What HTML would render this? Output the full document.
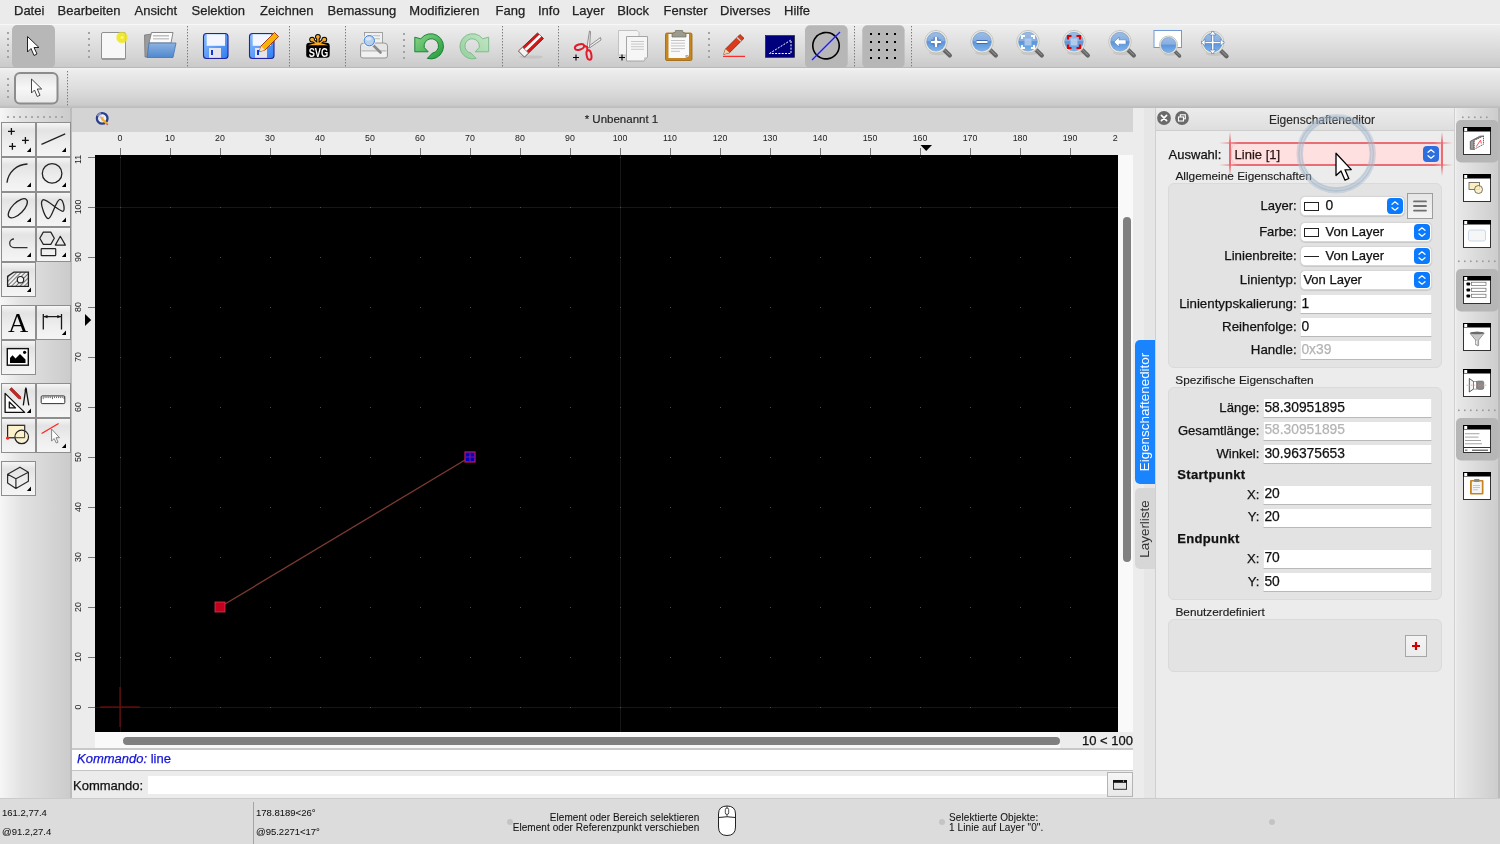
<!DOCTYPE html>
<html><head><meta charset="utf-8"><style>
html,body{margin:0;padding:0;width:1500px;height:844px;overflow:hidden;background:#ececec;font-family:"Liberation Sans",sans-serif}
.b,.t,svg.a{position:absolute}
.t{white-space:nowrap}
</style></head><body>
<div id="root" style="position:absolute;left:0;top:0;width:1500px;height:844px;overflow:hidden;will-change:transform">
<div class="b" style="left:0px;top:0px;width:1500px;height:24px;background:#ebebeb"></div>
<div class="t" style="left:14px;top:4.00px;font-size:13px;line-height:13px;color:#222;font-weight:normal;-webkit-text-stroke:0.25px currentColor;">Datei</div>
<div class="t" style="left:57.5px;top:4.00px;font-size:13px;line-height:13px;color:#222;font-weight:normal;-webkit-text-stroke:0.25px currentColor;">Bearbeiten</div>
<div class="t" style="left:134.5px;top:4.00px;font-size:13px;line-height:13px;color:#222;font-weight:normal;-webkit-text-stroke:0.25px currentColor;">Ansicht</div>
<div class="t" style="left:191.5px;top:4.00px;font-size:13px;line-height:13px;color:#222;font-weight:normal;-webkit-text-stroke:0.25px currentColor;">Selektion</div>
<div class="t" style="left:260px;top:4.00px;font-size:13px;line-height:13px;color:#222;font-weight:normal;-webkit-text-stroke:0.25px currentColor;">Zeichnen</div>
<div class="t" style="left:327.5px;top:4.00px;font-size:13px;line-height:13px;color:#222;font-weight:normal;-webkit-text-stroke:0.25px currentColor;">Bemassung</div>
<div class="t" style="left:409.3px;top:4.00px;font-size:13px;line-height:13px;color:#222;font-weight:normal;-webkit-text-stroke:0.25px currentColor;">Modifizieren</div>
<div class="t" style="left:495.5px;top:4.00px;font-size:13px;line-height:13px;color:#222;font-weight:normal;-webkit-text-stroke:0.25px currentColor;">Fang</div>
<div class="t" style="left:538px;top:4.00px;font-size:13px;line-height:13px;color:#222;font-weight:normal;-webkit-text-stroke:0.25px currentColor;">Info</div>
<div class="t" style="left:572px;top:4.00px;font-size:13px;line-height:13px;color:#222;font-weight:normal;-webkit-text-stroke:0.25px currentColor;">Layer</div>
<div class="t" style="left:617.3px;top:4.00px;font-size:13px;line-height:13px;color:#222;font-weight:normal;-webkit-text-stroke:0.25px currentColor;">Block</div>
<div class="t" style="left:663.5px;top:4.00px;font-size:13px;line-height:13px;color:#222;font-weight:normal;-webkit-text-stroke:0.25px currentColor;">Fenster</div>
<div class="t" style="left:720px;top:4.00px;font-size:13px;line-height:13px;color:#222;font-weight:normal;-webkit-text-stroke:0.25px currentColor;">Diverses</div>
<div class="t" style="left:784px;top:4.00px;font-size:13px;line-height:13px;color:#222;font-weight:normal;-webkit-text-stroke:0.25px currentColor;">Hilfe</div>
<div class="b" style="left:0px;top:24px;width:1500px;height:44px;background:linear-gradient(#efefef,#e6e6e6 25%,#d6d6d6 70%,#c9c9c9)"></div>
<div class="b" style="left:0px;top:24px;width:1500px;height:1px;background:#f7f7f7"></div>
<div class="b" style="left:0px;top:67px;width:1500px;height:1px;background:#b9b9b9"></div>
<div class="b" style="left:0px;top:68px;width:1500px;height:40px;background:linear-gradient(#f3f3f3,#ececec 8%,#dcdcdc 55%,#cbcbcb 92%,#bababa)"></div>
<svg class="a" style="left:0;top:0" width="1500" height="108" viewBox="0 0 1500 108"><defs>
<linearGradient id="lensg" x1="0" y1="0" x2="0" y2="1"><stop offset="0" stop-color="#9cbde6"/><stop offset="0.45" stop-color="#86aee0"/><stop offset="0.5" stop-color="#5d93d8"/><stop offset="1" stop-color="#7ab4ee"/></linearGradient>
<linearGradient id="flopg" x1="0" y1="0" x2="1" y2="1"><stop offset="0" stop-color="#8ec0ff"/><stop offset="1" stop-color="#2f7cf0"/></linearGradient>
<linearGradient id="folderg" x1="0" y1="0" x2="0" y2="1"><stop offset="0" stop-color="#8db3e0"/><stop offset="1" stop-color="#4f88cf"/></linearGradient>
<radialGradient id="glow"><stop offset="0" stop-color="#fffbe0"/><stop offset="0.3" stop-color="#f2ea20"/><stop offset="0.75" stop-color="#ece21a" stop-opacity="0.8"/><stop offset="1" stop-color="#f0e830" stop-opacity="0"/></radialGradient>
</defs><rect x="12" y="25" width="43" height="43" rx="5" fill="#b7b7b7"/><rect x="7" y="32" width="2" height="2" fill="#a3a3a3"/><rect x="7" y="38" width="2" height="2" fill="#a3a3a3"/><rect x="7" y="44" width="2" height="2" fill="#a3a3a3"/><rect x="7" y="50" width="2" height="2" fill="#a3a3a3"/><rect x="7" y="56" width="2" height="2" fill="#a3a3a3"/><path d="M27.5 36.5 L27.5 52 L31 48.5 L34 55.5 L37 54 L34 47.5 L39 47.5 Z" fill="#fff" stroke="#222" stroke-width="1" stroke-linejoin="round"/><rect x="88" y="32" width="2" height="2" fill="#a3a3a3"/><rect x="88" y="38" width="2" height="2" fill="#a3a3a3"/><rect x="88" y="44" width="2" height="2" fill="#a3a3a3"/><rect x="88" y="50" width="2" height="2" fill="#a3a3a3"/><rect x="88" y="56" width="2" height="2" fill="#a3a3a3"/><rect x="101.5" y="32.5" width="24" height="27" rx="1.5" fill="#f7f7f7" stroke="#8f8f8f" stroke-width="1"/><rect x="102" y="58" width="23" height="2" fill="#9a9a9a"/><circle cx="122" cy="37.5" r="6.5" fill="url(#glow)"/><path d="M144.5 35 L152 34 L149 57 L145 57 Z" fill="#9b9b9b" stroke="#777" stroke-width="0.8"/><path d="M151.5 32.5 L173 32.5 L171 43 L149 43 Z" fill="#fbfbfb" stroke="#7d7d7d" stroke-width="0.9"/><rect x="153" y="35" width="16" height="1.5" fill="#bdbdbd"/><rect x="153" y="38" width="16" height="1.5" fill="#c8c8c8"/><path d="M149 43 L176 43 L173 57.5 L147 57.5 Z" fill="url(#folderg)" stroke="#3f74b8" stroke-width="0.8"/><rect x="187" y="26" width="1" height="1.4" fill="#7a7a7a"/><rect x="187" y="29" width="1" height="1.4" fill="#7a7a7a"/><rect x="187" y="32" width="1" height="1.4" fill="#7a7a7a"/><rect x="187" y="35" width="1" height="1.4" fill="#7a7a7a"/><rect x="187" y="38" width="1" height="1.4" fill="#7a7a7a"/><rect x="187" y="41" width="1" height="1.4" fill="#7a7a7a"/><rect x="187" y="44" width="1" height="1.4" fill="#7a7a7a"/><rect x="187" y="47" width="1" height="1.4" fill="#7a7a7a"/><rect x="187" y="50" width="1" height="1.4" fill="#7a7a7a"/><rect x="187" y="53" width="1" height="1.4" fill="#7a7a7a"/><rect x="187" y="56" width="1" height="1.4" fill="#7a7a7a"/><rect x="187" y="59" width="1" height="1.4" fill="#7a7a7a"/><rect x="187" y="62" width="1" height="1.4" fill="#7a7a7a"/><rect x="187" y="65" width="1" height="1.4" fill="#7a7a7a"/><rect x="203.5" y="33.5" width="24.5" height="25" rx="3" fill="url(#flopg)" stroke="#2323a0" stroke-width="1.1"/><rect x="206.7" y="34.3" width="18.3" height="11.5" fill="#f4f6ff"/><rect x="209.0" y="48" width="12" height="9.8" fill="#e4e4ea"/><rect x="211.0" y="50" width="2" height="5" fill="#1038d8"/><rect x="249.5" y="33.5" width="24.5" height="25" rx="3" fill="url(#flopg)" stroke="#2323a0" stroke-width="1.1"/><rect x="252.7" y="34.3" width="18.3" height="11.5" fill="#f4f6ff"/><rect x="255.0" y="48" width="12" height="9.8" fill="#e4e4ea"/><rect x="257.0" y="50" width="2" height="5" fill="#1038d8"/><path d="M259.5 51.5 L261 46 L274.5 32.5 L278.5 36.5 L265 50 Z" fill="#f5b400" stroke="#a02810" stroke-width="0.9" stroke-linejoin="round"/><path d="M259.5 51.5 L261 46 L265 50 Z" fill="#f3e2b8"/><rect x="289" y="26" width="1" height="1.4" fill="#7a7a7a"/><rect x="289" y="29" width="1" height="1.4" fill="#7a7a7a"/><rect x="289" y="32" width="1" height="1.4" fill="#7a7a7a"/><rect x="289" y="35" width="1" height="1.4" fill="#7a7a7a"/><rect x="289" y="38" width="1" height="1.4" fill="#7a7a7a"/><rect x="289" y="41" width="1" height="1.4" fill="#7a7a7a"/><rect x="289" y="44" width="1" height="1.4" fill="#7a7a7a"/><rect x="289" y="47" width="1" height="1.4" fill="#7a7a7a"/><rect x="289" y="50" width="1" height="1.4" fill="#7a7a7a"/><rect x="289" y="53" width="1" height="1.4" fill="#7a7a7a"/><rect x="289" y="56" width="1" height="1.4" fill="#7a7a7a"/><rect x="289" y="59" width="1" height="1.4" fill="#7a7a7a"/><rect x="289" y="62" width="1" height="1.4" fill="#7a7a7a"/><rect x="289" y="65" width="1" height="1.4" fill="#7a7a7a"/><g><rect x="306.2" y="42.8" width="23.5" height="14.9" rx="3.2" fill="#000"/><path d="M318 44.5 L312.1 39.6 M318 44.5 L317.9 36.8 M318 44.5 L324.3 39.6" stroke="#000" stroke-width="3.4" stroke-linecap="round"/><circle cx="312.1" cy="39.6" r="2.9" fill="#000"/><circle cx="317.9" cy="36.8" r="2.9" fill="#000"/><circle cx="324.3" cy="39.6" r="2.9" fill="#000"/><path d="M318 44.5 L312.1 39.6 M318 44.5 L317.9 36.8 M318 44.5 L324.3 39.6" stroke="#f7a928" stroke-width="1.4" stroke-linecap="round"/><circle cx="312.1" cy="39.6" r="1.9" fill="#f7a928"/><circle cx="317.9" cy="36.8" r="1.9" fill="#f7a928"/><circle cx="324.3" cy="39.6" r="1.9" fill="#f7a928"/><path d="M308 45.3 Q313 43.8 318 42.5 Q323 43.8 328.2 45.3 Z" fill="#f7a928"/><text x="0" y="0" transform="translate(318.4 56.8) scale(0.68 1)" text-anchor="middle" font-family="Liberation Sans" font-weight="bold" font-size="13.6" fill="#fff">SVG</text></g><rect x="345" y="26" width="1" height="1.4" fill="#7a7a7a"/><rect x="345" y="29" width="1" height="1.4" fill="#7a7a7a"/><rect x="345" y="32" width="1" height="1.4" fill="#7a7a7a"/><rect x="345" y="35" width="1" height="1.4" fill="#7a7a7a"/><rect x="345" y="38" width="1" height="1.4" fill="#7a7a7a"/><rect x="345" y="41" width="1" height="1.4" fill="#7a7a7a"/><rect x="345" y="44" width="1" height="1.4" fill="#7a7a7a"/><rect x="345" y="47" width="1" height="1.4" fill="#7a7a7a"/><rect x="345" y="50" width="1" height="1.4" fill="#7a7a7a"/><rect x="345" y="53" width="1" height="1.4" fill="#7a7a7a"/><rect x="345" y="56" width="1" height="1.4" fill="#7a7a7a"/><rect x="345" y="59" width="1" height="1.4" fill="#7a7a7a"/><rect x="345" y="62" width="1" height="1.4" fill="#7a7a7a"/><rect x="345" y="65" width="1" height="1.4" fill="#7a7a7a"/><rect x="364.5" y="32.5" width="18" height="13" fill="#f0f0f0" stroke="#9a9a9a" stroke-width="0.9"/><rect x="367" y="35" width="13" height="1.3" fill="#c8c8c8"/><rect x="367" y="38" width="13" height="1.3" fill="#c8c8c8"/><path d="M360.5 46 Q360.5 43 364 43 L384 43 Q387.5 43 387.5 46 L387.5 56 Q387.5 58 385 58 L363 58 Q360.5 58 360.5 56 Z" fill="#e6e6e6" stroke="#8f8f8f" stroke-width="0.9"/><rect x="361.5" y="50" width="25" height="1.5" fill="#c4c4c4"/><rect x="362" y="52" width="24" height="5" fill="#f4f4f4" opacity="0.8"/><line x1="373" y1="45" x2="380.5" y2="52.5" stroke="#8a8a8a" stroke-width="2.6" stroke-linecap="round"/><circle cx="369.3" cy="40.7" r="6.3" fill="#fff" opacity="0.9"/><circle cx="369.3" cy="40.7" r="5.2" fill="#b8d0ee" stroke="#3f7fd0" stroke-width="1"/><ellipse cx="368.5" cy="38.8" rx="3" ry="1.8" fill="#e0ecfa" opacity="0.8"/><rect x="403" y="33" width="2" height="2" fill="#a3a3a3"/><rect x="403" y="39" width="2" height="2" fill="#a3a3a3"/><rect x="403" y="45" width="2" height="2" fill="#a3a3a3"/><rect x="403" y="51" width="2" height="2" fill="#a3a3a3"/><rect x="403" y="57" width="2" height="2" fill="#a3a3a3"/><defs><linearGradient id="undog" x1="0" y1="0" x2="1" y2="1"><stop offset="0" stop-color="#8ad68a"/><stop offset="1" stop-color="#1f9a38"/></linearGradient><linearGradient id="redog" x1="0" y1="0" x2="1" y2="1"><stop offset="0" stop-color="#c4e6c6"/><stop offset="1" stop-color="#93cf9c"/></linearGradient></defs><path d="M414.8 37.2 L414.8 51.8 L428.2 51.8 L424.3 47.6 A7.2 7.2 0 1 1 432.4 53.1 L427.3 58.4 A12.6 12.6 0 1 0 420.8 38.8 Z" fill="url(#undog)" stroke="#127a2c" stroke-width="0.9" stroke-linejoin="round"/><path transform="matrix(-1 0 0 1 903.45 0)" d="M414.8 37.2 L414.8 51.8 L428.2 51.8 L424.3 47.6 A7.2 7.2 0 1 1 432.4 53.1 L427.3 58.4 A12.6 12.6 0 1 0 420.8 38.8 Z" fill="url(#redog)" stroke="#78b888" stroke-width="0.9" stroke-linejoin="round"/><rect x="502" y="26" width="1" height="1.4" fill="#7a7a7a"/><rect x="502" y="29" width="1" height="1.4" fill="#7a7a7a"/><rect x="502" y="32" width="1" height="1.4" fill="#7a7a7a"/><rect x="502" y="35" width="1" height="1.4" fill="#7a7a7a"/><rect x="502" y="38" width="1" height="1.4" fill="#7a7a7a"/><rect x="502" y="41" width="1" height="1.4" fill="#7a7a7a"/><rect x="502" y="44" width="1" height="1.4" fill="#7a7a7a"/><rect x="502" y="47" width="1" height="1.4" fill="#7a7a7a"/><rect x="502" y="50" width="1" height="1.4" fill="#7a7a7a"/><rect x="502" y="53" width="1" height="1.4" fill="#7a7a7a"/><rect x="502" y="56" width="1" height="1.4" fill="#7a7a7a"/><rect x="502" y="59" width="1" height="1.4" fill="#7a7a7a"/><rect x="502" y="62" width="1" height="1.4" fill="#7a7a7a"/><rect x="502" y="65" width="1" height="1.4" fill="#7a7a7a"/><ellipse cx="531" cy="57" rx="12" ry="1.6" fill="#bbb" opacity="0.6"/><path d="M518.5 51 L537.5 33 L543.5 38.5 L524.5 57 Z" fill="#d01818" stroke="#6a1010" stroke-width="0.8" stroke-linejoin="round"/><path d="M520.5 52.8 L539.3 34.8 L541.3 36.6 L522.5 54.8 Z" fill="#fff"/><path d="M518.5 51 L522.5 47.3 L528.5 53 L524.5 57 Z" fill="#f4f4f4" stroke="#777" stroke-width="0.8"/><rect x="558" y="26" width="1" height="1.4" fill="#7a7a7a"/><rect x="558" y="29" width="1" height="1.4" fill="#7a7a7a"/><rect x="558" y="32" width="1" height="1.4" fill="#7a7a7a"/><rect x="558" y="35" width="1" height="1.4" fill="#7a7a7a"/><rect x="558" y="38" width="1" height="1.4" fill="#7a7a7a"/><rect x="558" y="41" width="1" height="1.4" fill="#7a7a7a"/><rect x="558" y="44" width="1" height="1.4" fill="#7a7a7a"/><rect x="558" y="47" width="1" height="1.4" fill="#7a7a7a"/><rect x="558" y="50" width="1" height="1.4" fill="#7a7a7a"/><rect x="558" y="53" width="1" height="1.4" fill="#7a7a7a"/><rect x="558" y="56" width="1" height="1.4" fill="#7a7a7a"/><rect x="558" y="59" width="1" height="1.4" fill="#7a7a7a"/><rect x="558" y="62" width="1" height="1.4" fill="#7a7a7a"/><rect x="558" y="65" width="1" height="1.4" fill="#7a7a7a"/><path d="M587 47 L589.5 31 L590.5 31.5 L589.5 48 Z" fill="#f0f0f0" stroke="#777" stroke-width="0.8"/><path d="M589 46 L600.5 37.5 L601 40 L590 47.5 Z" fill="#f0f0f0" stroke="#777" stroke-width="0.8"/><ellipse cx="579.5" cy="47" rx="4.8" ry="2.6" transform="rotate(-20 579.5 47)" fill="none" stroke="#e01c2c" stroke-width="2"/><ellipse cx="589" cy="55" rx="2.4" ry="4.8" transform="rotate(-10 589 55)" fill="none" stroke="#e01c2c" stroke-width="2"/><path d="M583.5 45.5 L587 47 L587.5 51" fill="none" stroke="#e01c2c" stroke-width="2"/><path d="M573 57.5 L579 57.5 M576 54.5 L576 60.5" stroke="#000" stroke-width="1.1"/><path d="M618.5 30.5 L637 30.5 L639 32.5 L639 55 L618.5 55 Z" fill="#f4f4f4" stroke="#b8b8b8" stroke-width="0.8"/><path d="M626.5 36.5 L647.5 36.5 L647.5 57 L644 61 L626.5 61 Z" fill="#f6f6f6" stroke="#9d9d9d" stroke-width="0.9"/><path d="M644 61 L644 57.5 L647.5 57 Z" fill="#c9c9c9"/><rect x="631" y="41.0" width="13" height="1" fill="#c8c8c8"/><rect x="631" y="43.6" width="13" height="1" fill="#c8c8c8"/><rect x="631" y="46.2" width="13" height="1" fill="#c8c8c8"/><rect x="631" y="48.8" width="13" height="1" fill="#c8c8c8"/><path d="M619 57.5 L625 57.5 M622 54.5 L622 60.5" stroke="#000" stroke-width="1.1"/><rect x="665.5" y="33" width="26.5" height="27.5" rx="1.5" fill="#c5851f" stroke="#9a6414" stroke-width="0.8"/><path d="M668.5 34 L689 34 L689 56 L685.5 58 L668.5 58 Z" fill="#fafafa"/><path d="M685.5 58 L685.5 55 L689 55 Z" fill="#aaa"/><path d="M672 37 L672 34 Q673 32.5 675 32.5 L675.5 30.5 L682.5 30.5 L683 32.5 Q685 32.5 686 34 L686 37 Z" fill="#9b9b8e" stroke="#6f6f66" stroke-width="0.7"/><rect x="671" y="40.0" width="14" height="1" fill="#c4c4c4"/><rect x="671" y="42.7" width="14" height="1" fill="#c4c4c4"/><rect x="671" y="45.4" width="14" height="1" fill="#c4c4c4"/><rect x="671" y="48.1" width="14" height="1" fill="#c4c4c4"/><rect x="671" y="50.8" width="9" height="1" fill="#c4c4c4"/><rect x="708" y="32" width="2" height="2" fill="#a3a3a3"/><rect x="708" y="38" width="2" height="2" fill="#a3a3a3"/><rect x="708" y="44" width="2" height="2" fill="#a3a3a3"/><rect x="708" y="50" width="2" height="2" fill="#a3a3a3"/><rect x="708" y="56" width="2" height="2" fill="#a3a3a3"/><rect x="723" y="55.8" width="22" height="1.1" fill="#ff1a1a"/><path d="M723.8 54.3 L725.5 49 L740 34.5 L744 38.3 L729.5 52.7 Z" fill="#dc3a1c" stroke="#7a2e10" stroke-width="0.8" stroke-linejoin="round"/><path d="M723.8 54.3 L725.5 49 L729.5 52.7 Z" fill="#efd7a8"/><path d="M737 37.5 L741 41.3" stroke="#ccc" stroke-width="1.5"/><rect x="765.5" y="35.6" width="29" height="21.7" fill="#00007c" stroke="#111" stroke-width="0.6"/><path d="M769.5 53.5 L791 40 L791 53.5 Z" fill="none" stroke="#fff" stroke-width="1" stroke-dasharray="2 1.3"/><rect x="805" y="25.3" width="42.7" height="42.7" rx="5" fill="#b7b7b7"/><circle cx="826" cy="45.7" r="13.2" fill="none" stroke="#000" stroke-width="1.6" stroke-dasharray="2.4 0" /><line x1="812" y1="60" x2="840" y2="32" stroke="#1a1aff" stroke-width="1.2"/><rect x="854" y="26" width="1" height="1.4" fill="#7a7a7a"/><rect x="854" y="29" width="1" height="1.4" fill="#7a7a7a"/><rect x="854" y="32" width="1" height="1.4" fill="#7a7a7a"/><rect x="854" y="35" width="1" height="1.4" fill="#7a7a7a"/><rect x="854" y="38" width="1" height="1.4" fill="#7a7a7a"/><rect x="854" y="41" width="1" height="1.4" fill="#7a7a7a"/><rect x="854" y="44" width="1" height="1.4" fill="#7a7a7a"/><rect x="854" y="47" width="1" height="1.4" fill="#7a7a7a"/><rect x="854" y="50" width="1" height="1.4" fill="#7a7a7a"/><rect x="854" y="53" width="1" height="1.4" fill="#7a7a7a"/><rect x="854" y="56" width="1" height="1.4" fill="#7a7a7a"/><rect x="854" y="59" width="1" height="1.4" fill="#7a7a7a"/><rect x="854" y="62" width="1" height="1.4" fill="#7a7a7a"/><rect x="854" y="65" width="1" height="1.4" fill="#7a7a7a"/><rect x="862.3" y="25.3" width="42.3" height="42.7" rx="5" fill="#b7b7b7"/><rect x="870" y="33" width="2" height="2" fill="#000"/><rect x="870" y="41" width="2" height="2" fill="#000"/><rect x="870" y="49" width="2" height="2" fill="#000"/><rect x="870" y="57" width="2" height="2" fill="#000"/><rect x="878" y="33" width="2" height="2" fill="#000"/><rect x="878" y="41" width="2" height="2" fill="#000"/><rect x="878" y="49" width="2" height="2" fill="#000"/><rect x="878" y="57" width="2" height="2" fill="#000"/><rect x="886" y="33" width="2" height="2" fill="#000"/><rect x="886" y="41" width="2" height="2" fill="#000"/><rect x="886" y="49" width="2" height="2" fill="#000"/><rect x="886" y="57" width="2" height="2" fill="#000"/><rect x="894" y="33" width="2" height="2" fill="#000"/><rect x="894" y="41" width="2" height="2" fill="#000"/><rect x="894" y="49" width="2" height="2" fill="#000"/><rect x="894" y="57" width="2" height="2" fill="#000"/><rect x="911" y="26" width="1" height="1.4" fill="#7a7a7a"/><rect x="911" y="29" width="1" height="1.4" fill="#7a7a7a"/><rect x="911" y="32" width="1" height="1.4" fill="#7a7a7a"/><rect x="911" y="35" width="1" height="1.4" fill="#7a7a7a"/><rect x="911" y="38" width="1" height="1.4" fill="#7a7a7a"/><rect x="911" y="41" width="1" height="1.4" fill="#7a7a7a"/><rect x="911" y="44" width="1" height="1.4" fill="#7a7a7a"/><rect x="911" y="47" width="1" height="1.4" fill="#7a7a7a"/><rect x="911" y="50" width="1" height="1.4" fill="#7a7a7a"/><rect x="911" y="53" width="1" height="1.4" fill="#7a7a7a"/><rect x="911" y="56" width="1" height="1.4" fill="#7a7a7a"/><rect x="911" y="59" width="1" height="1.4" fill="#7a7a7a"/><rect x="911" y="62" width="1" height="1.4" fill="#7a7a7a"/><rect x="911" y="65" width="1" height="1.4" fill="#7a7a7a"/><g>
<ellipse cx="938" cy="52.7" rx="9.0" ry="2.5" fill="#000" opacity="0.07"/>
<line x1="944.2" y1="49.900000000000006" x2="949.8" y2="55.5" stroke="#656565" stroke-width="4.3" stroke-linecap="round"/>
<line x1="945.0" y1="50.300000000000004" x2="949.6" y2="54.900000000000006" stroke="#9a9a9a" stroke-width="1.0" stroke-linecap="round"/>
<circle cx="936" cy="41.7" r="11.3" fill="#ecebe3" stroke="#bdbdb5" stroke-width="0.8"/>
<circle cx="936" cy="41.7" r="9.4" fill="url(#lensg)" stroke="#6a93c9" stroke-width="0.6"/>
<path d="M931 42 L941 42 M936 37 L936 47" stroke="#2c59a8" stroke-width="4.4"/><path d="M931 42 L941 42 M936 37 L936 47" stroke="#fff" stroke-width="2.6"/>
</g><g>
<ellipse cx="984" cy="52.7" rx="9.0" ry="2.5" fill="#000" opacity="0.07"/>
<line x1="990.2" y1="49.900000000000006" x2="995.8" y2="55.5" stroke="#656565" stroke-width="4.3" stroke-linecap="round"/>
<line x1="991.0" y1="50.300000000000004" x2="995.6" y2="54.900000000000006" stroke="#9a9a9a" stroke-width="1.0" stroke-linecap="round"/>
<circle cx="982" cy="41.7" r="11.3" fill="#ecebe3" stroke="#bdbdb5" stroke-width="0.8"/>
<circle cx="982" cy="41.7" r="9.4" fill="url(#lensg)" stroke="#6a93c9" stroke-width="0.6"/>
<path d="M976.5 42 L987.5 42" stroke="#2c59a8" stroke-width="4"/><path d="M976.5 42 L987.5 42" stroke="#fff" stroke-width="2.2"/>
</g><g>
<ellipse cx="1030" cy="52.7" rx="9.0" ry="2.5" fill="#000" opacity="0.07"/>
<line x1="1036.2" y1="49.900000000000006" x2="1041.8" y2="55.5" stroke="#656565" stroke-width="4.3" stroke-linecap="round"/>
<line x1="1037.0" y1="50.300000000000004" x2="1041.6" y2="54.900000000000006" stroke="#9a9a9a" stroke-width="1.0" stroke-linecap="round"/>
<circle cx="1028" cy="41.7" r="11.3" fill="#ecebe3" stroke="#bdbdb5" stroke-width="0.8"/>
<circle cx="1028" cy="41.7" r="9.4" fill="url(#lensg)" stroke="#6a93c9" stroke-width="0.6"/>
<path d="M1022 39 L1022 36 L1025 36 M1031 36 L1034 36 L1034 39 M1034 45 L1034 48 L1031 48 M1025 48 L1022 48 L1022 45" fill="none" stroke="#fff" stroke-width="1.8"/><rect x="1024.5" y="38.5" width="7" height="7" fill="#b9d0ee" opacity="0.8"/>
</g><g>
<ellipse cx="1076" cy="52.7" rx="9.0" ry="2.5" fill="#000" opacity="0.07"/>
<line x1="1082.2" y1="49.900000000000006" x2="1087.8" y2="55.5" stroke="#656565" stroke-width="4.3" stroke-linecap="round"/>
<line x1="1083.0" y1="50.300000000000004" x2="1087.6" y2="54.900000000000006" stroke="#9a9a9a" stroke-width="1.0" stroke-linecap="round"/>
<circle cx="1074" cy="41.7" r="11.3" fill="#ecebe3" stroke="#bdbdb5" stroke-width="0.8"/>
<circle cx="1074" cy="41.7" r="9.4" fill="url(#lensg)" stroke="#6a93c9" stroke-width="0.6"/>
<rect x="1070.5" y="38.5" width="7" height="7" fill="#b9d0ee" opacity="0.9"/><path d="M1068 39.5 L1068 36 L1071.5 36 M1076.5 36 L1080 36 L1080 39.5 M1080 44.5 L1080 48 L1076.5 48 M1071.5 48 L1068 48 L1068 44.5" fill="none" stroke="#e00000" stroke-width="2.2"/>
</g><g>
<ellipse cx="1122" cy="52.7" rx="9.0" ry="2.5" fill="#000" opacity="0.07"/>
<line x1="1128.2" y1="49.900000000000006" x2="1133.8" y2="55.5" stroke="#656565" stroke-width="4.3" stroke-linecap="round"/>
<line x1="1129.0" y1="50.300000000000004" x2="1133.6" y2="54.900000000000006" stroke="#9a9a9a" stroke-width="1.0" stroke-linecap="round"/>
<circle cx="1120" cy="41.7" r="11.3" fill="#ecebe3" stroke="#bdbdb5" stroke-width="0.8"/>
<circle cx="1120" cy="41.7" r="9.4" fill="url(#lensg)" stroke="#6a93c9" stroke-width="0.6"/>
<path d="M1114 42 L1119 37 L1119 39.8 L1126 39.8 L1126 44.2 L1119 44.2 L1119 47 Z" fill="#fff" stroke="#4a7cc0" stroke-width="0.6"/>
</g><rect x="1154" y="30.5" width="27.5" height="17" fill="#fff" stroke="#6f9ad6" stroke-width="1"/><g>
<ellipse cx="1170.5" cy="53.8" rx="7.2" ry="2.0" fill="#000" opacity="0.07"/>
<line x1="1175.06" y1="51.56" x2="1179.54" y2="56.04" stroke="#656565" stroke-width="3.44" stroke-linecap="round"/>
<line x1="1175.7" y1="51.88" x2="1179.38" y2="55.56" stroke="#9a9a9a" stroke-width="0.8" stroke-linecap="round"/>
<circle cx="1168.5" cy="45" r="9.040000000000001" fill="#ecebe3" stroke="#bdbdb5" stroke-width="0.8"/>
<circle cx="1168.5" cy="45" r="7.5200000000000005" fill="url(#lensg)" stroke="#6a93c9" stroke-width="0.6"/>

</g><g>
<ellipse cx="1214.7" cy="53.5" rx="9.0" ry="2.5" fill="#000" opacity="0.07"/>
<line x1="1220.9" y1="50.7" x2="1226.5" y2="56.3" stroke="#656565" stroke-width="4.3" stroke-linecap="round"/>
<line x1="1221.7" y1="51.1" x2="1226.3" y2="55.7" stroke="#9a9a9a" stroke-width="1.0" stroke-linecap="round"/>
<circle cx="1212.7" cy="42.5" r="11.3" fill="#ecebe3" stroke="#bdbdb5" stroke-width="0.8"/>
<circle cx="1212.7" cy="42.5" r="9.4" fill="url(#lensg)" stroke="#6a93c9" stroke-width="0.6"/>
<path d="M1212.7 31.5 L1212.7 53.5 M1201.5 42.5 L1223.9 42.5" stroke="#4a7cc0" stroke-width="3"/><path d="M1212.7 32 L1212.7 53 M1202 42.5 L1223.4 42.5" stroke="#fff" stroke-width="1.6"/><path d="M1209.5 35 L1212.7 31 L1215.9 35 Z M1209.5 50 L1212.7 54 L1215.9 50 Z M1205 39.3 L1201 42.5 L1205 45.7 Z M1220.4 39.3 L1224.4 42.5 L1220.4 45.7 Z" fill="#fff" stroke="#4a7cc0" stroke-width="0.6"/>
</g><rect x="7" y="78" width="2" height="2" fill="#a3a3a3"/><rect x="7" y="84" width="2" height="2" fill="#a3a3a3"/><rect x="7" y="90" width="2" height="2" fill="#a3a3a3"/><rect x="7" y="96" width="2" height="2" fill="#a3a3a3"/><rect x="15" y="73" width="42.5" height="30.5" rx="5" fill="url(#tb2btn)" stroke="#8c8c8c" stroke-width="2"/><defs><linearGradient id="tb2btn" x1="0" y1="0" x2="0" y2="1"><stop offset="0" stop-color="#e3e3e3"/><stop offset="0.5" stop-color="#f7f7f7"/><stop offset="1" stop-color="#e8e8e8"/></linearGradient></defs><path d="M31.5 79 L31.5 93 L34.5 90 L37.2 96.5 L40 95.3 L37.3 89 L41.7 89 Z" fill="#fff" stroke="#333" stroke-width="0.9" stroke-linejoin="round"/><rect x="67" y="71" width="1" height="1.4" fill="#7a7a7a"/><rect x="67" y="74" width="1" height="1.4" fill="#7a7a7a"/><rect x="67" y="77" width="1" height="1.4" fill="#7a7a7a"/><rect x="67" y="80" width="1" height="1.4" fill="#7a7a7a"/><rect x="67" y="83" width="1" height="1.4" fill="#7a7a7a"/><rect x="67" y="86" width="1" height="1.4" fill="#7a7a7a"/><rect x="67" y="89" width="1" height="1.4" fill="#7a7a7a"/><rect x="67" y="92" width="1" height="1.4" fill="#7a7a7a"/><rect x="67" y="95" width="1" height="1.4" fill="#7a7a7a"/><rect x="67" y="98" width="1" height="1.4" fill="#7a7a7a"/><rect x="67" y="101" width="1" height="1.4" fill="#7a7a7a"/><rect x="67" y="104" width="1" height="1.4" fill="#7a7a7a"/></svg>
<div class="b" style="left:0px;top:108px;width:71px;height:690px;background:linear-gradient(90deg,#f6f6f6,#e2e2e2 30%,#cbcbcb)"></div>
<div class="b" style="left:70px;top:108px;width:2px;height:690px;background:#bcbcbc"></div>
<svg class="a" style="left:0;top:0" width="72" height="520" viewBox="0 0 72 520"><defs><linearGradient id="btng" x1="0" y1="0" x2="0" y2="1"><stop offset="0" stop-color="#f7f7f7"/><stop offset="0.22" stop-color="#e3e3e3"/><stop offset="0.6" stop-color="#eeeeee"/><stop offset="1" stop-color="#f5f5f5"/></linearGradient></defs><rect x="7" y="116" width="2" height="2" fill="#a8a8a8"/><rect x="13" y="116" width="2" height="2" fill="#a8a8a8"/><rect x="19" y="116" width="2" height="2" fill="#a8a8a8"/><rect x="25" y="116" width="2" height="2" fill="#a8a8a8"/><rect x="31" y="116" width="2" height="2" fill="#a8a8a8"/><rect x="37" y="116" width="2" height="2" fill="#a8a8a8"/><rect x="43" y="116" width="2" height="2" fill="#a8a8a8"/><rect x="49" y="116" width="2" height="2" fill="#a8a8a8"/><rect x="55" y="116" width="2" height="2" fill="#a8a8a8"/><rect x="61" y="116" width="2" height="2" fill="#a8a8a8"/><rect x="1.5" y="122.5" width="34" height="34" fill="url(#btng)" stroke="#8e8e8e" stroke-width="1"/><rect x="36.5" y="122.5" width="34" height="34" fill="url(#btng)" stroke="#8e8e8e" stroke-width="1"/><rect x="1.5" y="157.5" width="34" height="34" fill="url(#btng)" stroke="#8e8e8e" stroke-width="1"/><rect x="36.5" y="157.5" width="34" height="34" fill="url(#btng)" stroke="#8e8e8e" stroke-width="1"/><rect x="1.5" y="192.5" width="34" height="34" fill="url(#btng)" stroke="#8e8e8e" stroke-width="1"/><rect x="36.5" y="192.5" width="34" height="34" fill="url(#btng)" stroke="#8e8e8e" stroke-width="1"/><rect x="1.5" y="227.5" width="34" height="34" fill="url(#btng)" stroke="#8e8e8e" stroke-width="1"/><rect x="36.5" y="227.5" width="34" height="34" fill="url(#btng)" stroke="#8e8e8e" stroke-width="1"/><rect x="1.5" y="262.5" width="34" height="34" fill="url(#btng)" stroke="#8e8e8e" stroke-width="1"/><rect x="1.5" y="305.5" width="34" height="34" fill="url(#btng)" stroke="#8e8e8e" stroke-width="1"/><rect x="1.5" y="340.5" width="34" height="34" fill="url(#btng)" stroke="#8e8e8e" stroke-width="1"/><rect x="36.5" y="305.5" width="34" height="34" fill="url(#btng)" stroke="#8e8e8e" stroke-width="1"/><rect x="1.5" y="383.5" width="34" height="34" fill="url(#btng)" stroke="#8e8e8e" stroke-width="1"/><rect x="36.5" y="383.5" width="34" height="34" fill="url(#btng)" stroke="#8e8e8e" stroke-width="1"/><rect x="1.5" y="418.5" width="34" height="34" fill="url(#btng)" stroke="#8e8e8e" stroke-width="1"/><rect x="36.5" y="418.5" width="34" height="34" fill="url(#btng)" stroke="#8e8e8e" stroke-width="1"/><rect x="1.5" y="461.5" width="34" height="34" fill="url(#btng)" stroke="#8e8e8e" stroke-width="1"/><path d="M8.0 131.4 L14.8 131.4 M11.4 128.0 L11.4 134.8" stroke="#111" stroke-width="1.3"/><path d="M22.0 140.4 L28.799999999999997 140.4 M25.4 137.0 L25.4 143.8" stroke="#111" stroke-width="1.3"/><path d="M9.0 146.4 L15.8 146.4 M12.4 143.0 L12.4 149.8" stroke="#111" stroke-width="1.3"/><path d="M26.8 152 L31 152 L31 147.6 Z" fill="#000"/><line x1="41.5" y1="144.3" x2="65.2" y2="133.9" stroke="#222" stroke-width="1.3"/><path d="M61.8 152 L66 152 L66 147.6 Z" fill="#000"/><path d="M7 182.8 A21 21 0 0 1 27.5 164" fill="none" stroke="#222" stroke-width="1.3"/><path d="M26.8 187 L31 187 L31 182.6 Z" fill="#000"/><circle cx="52.1" cy="173.4" r="9.8" fill="none" stroke="#222" stroke-width="1.3"/><path d="M61.8 187 L66 187 L66 182.6 Z" fill="#000"/><ellipse cx="17.8" cy="208.3" rx="12.3" ry="5.6" transform="rotate(-45 17.8 208.3)" fill="none" stroke="#222" stroke-width="1.3"/><path d="M26.8 222 L31 222 L31 217.6 Z" fill="#000"/><path transform="translate(36 192)" d="M7.5 7.7 C 12 8, 23 19.5, 27 19.3 C 29.5 19, 27.5 7.3, 24 7.3 C 20 7.3, 16 26.6, 12.4 26.6 C 9 26.6, 5 13, 5.6 10 C 6 8, 7 7.7, 7.5 7.7 Z" fill="none" stroke="#222" stroke-width="1.3"/><path d="M61.8 222 L66 222 L66 217.6 Z" fill="#000"/><path transform="translate(1 227)" d="M13 12 A4.3 4.3 0 0 0 13 20.6 L26.5 20.6" fill="none" stroke="#333" stroke-width="1.3"/><path d="M26.8 257 L31 257 L31 252.6 Z" fill="#000"/><path transform="translate(36 227)" d="M3.8 11.2 L7.3 5.1 L14.8 5.1 L18.3 11.2 L14.8 17.4 L7.3 17.4 Z M19.3 18.1 L29.4 18.1 L24.3 9.3 Z" fill="none" stroke="#222" stroke-width="1.2" stroke-linejoin="round"/><rect x="41.2" y="248.6" width="14.5" height="7" rx="0.6" fill="none" stroke="#222" stroke-width="1.2"/><path d="M61.8 257 L66 257 L66 252.6 Z" fill="#000"/><defs><pattern id="hatchp" width="3" height="3" patternUnits="userSpaceOnUse" patternTransform="rotate(45)"><rect width="3" height="3" fill="#efefef"/><rect width="1" height="3" fill="#777"/></pattern><clipPath id="hclip"><path d="M7.6 276.3 L13.9 272.2 L28.4 272.2 L28.4 286.3 L7.6 286.3 Z"/></clipPath></defs><path d="M7.6 276.3 L13.9 272.2 L28.4 272.2 L28.4 286.3 L7.6 286.3 Z" fill="url(#hatchp)" stroke="#222" stroke-width="1.3"/><circle cx="20.5" cy="279.7" r="3.2" fill="#f4f4f4" stroke="#222" stroke-width="1.2"/><path d="M26.8 292 L31 292 L31 287.6 Z" fill="#000"/><text x="18" y="332" text-anchor="middle" font-family="Liberation Serif" font-size="28" fill="#000">A</text><path transform="translate(36 305)" d="M7.3 9.1 L7.3 24.5 M25.5 9.1 L25.5 24.5 M8 11.6 L24.8 11.6" fill="none" stroke="#1a1a1a" stroke-width="1.3"/><path transform="translate(36 305)" d="M7.6 11.6 L11.5 9.9 L11.5 13.3 Z M25.2 11.6 L21.3 9.9 L21.3 13.3 Z" fill="#111"/><path d="M61.8 335 L66 335 L66 330.6 Z" fill="#000"/><rect x="7.3" y="348.6" width="21" height="16.6" fill="#fff" stroke="#111" stroke-width="1.4"/><path transform="translate(1 340)" d="M9 23 L9 18 L11.5 15.2 L14.5 18.5 L19 14 L24.5 19.5 L24.5 23 Z" fill="#000"/><circle cx="24.6" cy="352.3" r="1.6" fill="#000"/><path transform="translate(1 383)" d="M4.1 10.4 L4.1 29.4 L23.6 29.4 Z M8.3 19 L8.3 24.9 L14.5 24.9 Z" fill="#fff" fill-rule="evenodd" stroke="#111" stroke-width="1.3" stroke-linejoin="round"/><path transform="translate(1 383)" d="M8.6 6.5 L10.5 4.6 L19.5 13.6 L19.8 16 L17.4 15.6 Z" fill="#d42020" stroke="#7a1a10" stroke-width="0.6"/><path transform="translate(1 383)" d="M24.9 4.5 L22.3 22.4 M24.9 4.5 L27.8 22.4" fill="none" stroke="#111" stroke-width="1.3"/><circle cx="25.9" cy="390" r="1.3" fill="#111"/><path d="M26.8 413 L31 413 L31 408.6 Z" fill="#000"/><rect x="41.2" y="395.9" width="23.6" height="7.7" rx="1" fill="#fff" stroke="#333" stroke-width="1"/><rect x="42.8" y="396.5" width="0.7" height="2.6" fill="#333"/><rect x="44.699999999999996" y="396.5" width="0.7" height="1.6" fill="#333"/><rect x="46.599999999999994" y="396.5" width="0.7" height="1.6" fill="#333"/><rect x="48.5" y="396.5" width="0.7" height="1.6" fill="#333"/><rect x="50.4" y="396.5" width="0.7" height="1.6" fill="#333"/><rect x="52.3" y="396.5" width="0.7" height="2.6" fill="#333"/><rect x="54.199999999999996" y="396.5" width="0.7" height="1.6" fill="#333"/><rect x="56.099999999999994" y="396.5" width="0.7" height="1.6" fill="#333"/><rect x="58.0" y="396.5" width="0.7" height="1.6" fill="#333"/><rect x="59.89999999999999" y="396.5" width="0.7" height="1.6" fill="#333"/><rect x="61.8" y="396.5" width="0.7" height="1.6" fill="#333"/><rect x="63.699999999999996" y="396.5" width="0.7" height="2.6" fill="#333"/><rect x="7.6" y="425.3" width="17" height="12.4" fill="#fdf2cc" stroke="#222" stroke-width="1.2"/><circle cx="21.7" cy="436.9" r="6.8" fill="#fdf2cc" fill-opacity="0.85" stroke="#222" stroke-width="1.2"/><path d="M7.6 437.7 L24.6 437.7 L24.6 425.3" fill="none" stroke="#444" stroke-width="1"/><circle cx="7.6" cy="438.1" r="1.7" fill="#ff2020"/><line x1="41.6" y1="433.6" x2="58.6" y2="423.6" stroke="#ff2020" stroke-width="1.2"/><path transform="translate(36 418)" d="M15.6 11 L15.6 23 L18.2 20.5 L20.3 25 L22 24.2 L20 19.7 L23.5 19.7 Z" fill="#fff" stroke="#777" stroke-width="0.9" stroke-linejoin="round"/><path d="M61.8 448 L66 448 L66 443.6 Z" fill="#000"/><path transform="translate(1 461)" d="M18.9 6.2 L27.4 11.2 L27.4 20.3 L14.9 27.4 L6.6 22 L6.6 13.3 Z M6.6 13.3 L14.9 17.8 L27.4 11.2 M14.9 17.8 L14.9 27.4" fill="none" stroke="#2a2a2a" stroke-width="1.2" stroke-linejoin="round"/><path d="M26.8 491 L31 491 L31 486.6 Z" fill="#000"/></svg>
<div class="b" style="left:72px;top:108px;width:1062px;height:24px;background:#d4d4d4"></div>
<div class="b" style="left:72px;top:132px;width:1061px;height:23px;background:#ececec"></div>
<svg class="a" style="left:93px;top:110px" width="18" height="18" viewBox="93 110 18 18"><circle cx="102.2" cy="118.4" r="5.3" fill="#f2f2f2" stroke="#2c3f8c" stroke-width="2.3"/><path d="M97.5 116 A5.3 5.3 0 0 1 101 113.2" stroke="#8090c8" stroke-width="2" fill="none"/><path d="M99 119.5 L104 116.5 M101 114.5 L102 122" stroke="#bbb" stroke-width="0.5"/><path d="M98.5 117 L104 118 M100 115.5 L103 121" stroke="#d88" stroke-width="0.5"/><path d="M101.5 118 L106.5 123.5" stroke="#f0b020" stroke-width="2"/><circle cx="107.2" cy="124.2" r="1" fill="#e06060"/></svg>
<div class="t" style="left:584.7px;top:114.37px;font-size:11.5px;line-height:11.5px;color:#222;font-weight:normal;-webkit-text-stroke:0.15px currentColor;">* Unbenannt 1</div>
<div class="b" style="left:72px;top:155px;width:23px;height:577px;background:#ececec"></div>
<div class="b" style="left:95px;top:155px;width:1023px;height:577px;background:#000"></div>
<svg class="a" style="left:95px;top:155px" width="1023" height="577" viewBox="0 0 1023 577"><rect x="25" y="0" width="1" height="577" fill="#161616"/><rect x="525" y="0" width="1" height="577" fill="#161616"/><rect x="0" y="52" width="1023" height="1" fill="#161616"/><rect x="0" y="552" width="1023" height="1" fill="#161616"/><rect x="25" y="552" width="1" height="1" fill="#4a4a4a"/><rect x="25" y="502" width="1" height="1" fill="#4a4a4a"/><rect x="25" y="452" width="1" height="1" fill="#4a4a4a"/><rect x="25" y="402" width="1" height="1" fill="#4a4a4a"/><rect x="25" y="352" width="1" height="1" fill="#4a4a4a"/><rect x="25" y="302" width="1" height="1" fill="#4a4a4a"/><rect x="25" y="252" width="1" height="1" fill="#4a4a4a"/><rect x="25" y="202" width="1" height="1" fill="#4a4a4a"/><rect x="25" y="152" width="1" height="1" fill="#4a4a4a"/><rect x="25" y="102" width="1" height="1" fill="#4a4a4a"/><rect x="25" y="52" width="1" height="1" fill="#4a4a4a"/><rect x="25" y="2" width="1" height="1" fill="#4a4a4a"/><rect x="75" y="552" width="1" height="1" fill="#4a4a4a"/><rect x="75" y="502" width="1" height="1" fill="#4a4a4a"/><rect x="75" y="452" width="1" height="1" fill="#4a4a4a"/><rect x="75" y="402" width="1" height="1" fill="#4a4a4a"/><rect x="75" y="352" width="1" height="1" fill="#4a4a4a"/><rect x="75" y="302" width="1" height="1" fill="#4a4a4a"/><rect x="75" y="252" width="1" height="1" fill="#4a4a4a"/><rect x="75" y="202" width="1" height="1" fill="#4a4a4a"/><rect x="75" y="152" width="1" height="1" fill="#4a4a4a"/><rect x="75" y="102" width="1" height="1" fill="#4a4a4a"/><rect x="75" y="52" width="1" height="1" fill="#4a4a4a"/><rect x="75" y="2" width="1" height="1" fill="#4a4a4a"/><rect x="125" y="552" width="1" height="1" fill="#4a4a4a"/><rect x="125" y="502" width="1" height="1" fill="#4a4a4a"/><rect x="125" y="452" width="1" height="1" fill="#4a4a4a"/><rect x="125" y="402" width="1" height="1" fill="#4a4a4a"/><rect x="125" y="352" width="1" height="1" fill="#4a4a4a"/><rect x="125" y="302" width="1" height="1" fill="#4a4a4a"/><rect x="125" y="252" width="1" height="1" fill="#4a4a4a"/><rect x="125" y="202" width="1" height="1" fill="#4a4a4a"/><rect x="125" y="152" width="1" height="1" fill="#4a4a4a"/><rect x="125" y="102" width="1" height="1" fill="#4a4a4a"/><rect x="125" y="52" width="1" height="1" fill="#4a4a4a"/><rect x="125" y="2" width="1" height="1" fill="#4a4a4a"/><rect x="175" y="552" width="1" height="1" fill="#4a4a4a"/><rect x="175" y="502" width="1" height="1" fill="#4a4a4a"/><rect x="175" y="452" width="1" height="1" fill="#4a4a4a"/><rect x="175" y="402" width="1" height="1" fill="#4a4a4a"/><rect x="175" y="352" width="1" height="1" fill="#4a4a4a"/><rect x="175" y="302" width="1" height="1" fill="#4a4a4a"/><rect x="175" y="252" width="1" height="1" fill="#4a4a4a"/><rect x="175" y="202" width="1" height="1" fill="#4a4a4a"/><rect x="175" y="152" width="1" height="1" fill="#4a4a4a"/><rect x="175" y="102" width="1" height="1" fill="#4a4a4a"/><rect x="175" y="52" width="1" height="1" fill="#4a4a4a"/><rect x="175" y="2" width="1" height="1" fill="#4a4a4a"/><rect x="225" y="552" width="1" height="1" fill="#4a4a4a"/><rect x="225" y="502" width="1" height="1" fill="#4a4a4a"/><rect x="225" y="452" width="1" height="1" fill="#4a4a4a"/><rect x="225" y="402" width="1" height="1" fill="#4a4a4a"/><rect x="225" y="352" width="1" height="1" fill="#4a4a4a"/><rect x="225" y="302" width="1" height="1" fill="#4a4a4a"/><rect x="225" y="252" width="1" height="1" fill="#4a4a4a"/><rect x="225" y="202" width="1" height="1" fill="#4a4a4a"/><rect x="225" y="152" width="1" height="1" fill="#4a4a4a"/><rect x="225" y="102" width="1" height="1" fill="#4a4a4a"/><rect x="225" y="52" width="1" height="1" fill="#4a4a4a"/><rect x="225" y="2" width="1" height="1" fill="#4a4a4a"/><rect x="275" y="552" width="1" height="1" fill="#4a4a4a"/><rect x="275" y="502" width="1" height="1" fill="#4a4a4a"/><rect x="275" y="452" width="1" height="1" fill="#4a4a4a"/><rect x="275" y="402" width="1" height="1" fill="#4a4a4a"/><rect x="275" y="352" width="1" height="1" fill="#4a4a4a"/><rect x="275" y="302" width="1" height="1" fill="#4a4a4a"/><rect x="275" y="252" width="1" height="1" fill="#4a4a4a"/><rect x="275" y="202" width="1" height="1" fill="#4a4a4a"/><rect x="275" y="152" width="1" height="1" fill="#4a4a4a"/><rect x="275" y="102" width="1" height="1" fill="#4a4a4a"/><rect x="275" y="52" width="1" height="1" fill="#4a4a4a"/><rect x="275" y="2" width="1" height="1" fill="#4a4a4a"/><rect x="325" y="552" width="1" height="1" fill="#4a4a4a"/><rect x="325" y="502" width="1" height="1" fill="#4a4a4a"/><rect x="325" y="452" width="1" height="1" fill="#4a4a4a"/><rect x="325" y="402" width="1" height="1" fill="#4a4a4a"/><rect x="325" y="352" width="1" height="1" fill="#4a4a4a"/><rect x="325" y="302" width="1" height="1" fill="#4a4a4a"/><rect x="325" y="252" width="1" height="1" fill="#4a4a4a"/><rect x="325" y="202" width="1" height="1" fill="#4a4a4a"/><rect x="325" y="152" width="1" height="1" fill="#4a4a4a"/><rect x="325" y="102" width="1" height="1" fill="#4a4a4a"/><rect x="325" y="52" width="1" height="1" fill="#4a4a4a"/><rect x="325" y="2" width="1" height="1" fill="#4a4a4a"/><rect x="375" y="552" width="1" height="1" fill="#4a4a4a"/><rect x="375" y="502" width="1" height="1" fill="#4a4a4a"/><rect x="375" y="452" width="1" height="1" fill="#4a4a4a"/><rect x="375" y="402" width="1" height="1" fill="#4a4a4a"/><rect x="375" y="352" width="1" height="1" fill="#4a4a4a"/><rect x="375" y="302" width="1" height="1" fill="#4a4a4a"/><rect x="375" y="252" width="1" height="1" fill="#4a4a4a"/><rect x="375" y="202" width="1" height="1" fill="#4a4a4a"/><rect x="375" y="152" width="1" height="1" fill="#4a4a4a"/><rect x="375" y="102" width="1" height="1" fill="#4a4a4a"/><rect x="375" y="52" width="1" height="1" fill="#4a4a4a"/><rect x="375" y="2" width="1" height="1" fill="#4a4a4a"/><rect x="425" y="552" width="1" height="1" fill="#4a4a4a"/><rect x="425" y="502" width="1" height="1" fill="#4a4a4a"/><rect x="425" y="452" width="1" height="1" fill="#4a4a4a"/><rect x="425" y="402" width="1" height="1" fill="#4a4a4a"/><rect x="425" y="352" width="1" height="1" fill="#4a4a4a"/><rect x="425" y="302" width="1" height="1" fill="#4a4a4a"/><rect x="425" y="252" width="1" height="1" fill="#4a4a4a"/><rect x="425" y="202" width="1" height="1" fill="#4a4a4a"/><rect x="425" y="152" width="1" height="1" fill="#4a4a4a"/><rect x="425" y="102" width="1" height="1" fill="#4a4a4a"/><rect x="425" y="52" width="1" height="1" fill="#4a4a4a"/><rect x="425" y="2" width="1" height="1" fill="#4a4a4a"/><rect x="475" y="552" width="1" height="1" fill="#4a4a4a"/><rect x="475" y="502" width="1" height="1" fill="#4a4a4a"/><rect x="475" y="452" width="1" height="1" fill="#4a4a4a"/><rect x="475" y="402" width="1" height="1" fill="#4a4a4a"/><rect x="475" y="352" width="1" height="1" fill="#4a4a4a"/><rect x="475" y="302" width="1" height="1" fill="#4a4a4a"/><rect x="475" y="252" width="1" height="1" fill="#4a4a4a"/><rect x="475" y="202" width="1" height="1" fill="#4a4a4a"/><rect x="475" y="152" width="1" height="1" fill="#4a4a4a"/><rect x="475" y="102" width="1" height="1" fill="#4a4a4a"/><rect x="475" y="52" width="1" height="1" fill="#4a4a4a"/><rect x="475" y="2" width="1" height="1" fill="#4a4a4a"/><rect x="525" y="552" width="1" height="1" fill="#4a4a4a"/><rect x="525" y="502" width="1" height="1" fill="#4a4a4a"/><rect x="525" y="452" width="1" height="1" fill="#4a4a4a"/><rect x="525" y="402" width="1" height="1" fill="#4a4a4a"/><rect x="525" y="352" width="1" height="1" fill="#4a4a4a"/><rect x="525" y="302" width="1" height="1" fill="#4a4a4a"/><rect x="525" y="252" width="1" height="1" fill="#4a4a4a"/><rect x="525" y="202" width="1" height="1" fill="#4a4a4a"/><rect x="525" y="152" width="1" height="1" fill="#4a4a4a"/><rect x="525" y="102" width="1" height="1" fill="#4a4a4a"/><rect x="525" y="52" width="1" height="1" fill="#4a4a4a"/><rect x="525" y="2" width="1" height="1" fill="#4a4a4a"/><rect x="575" y="552" width="1" height="1" fill="#4a4a4a"/><rect x="575" y="502" width="1" height="1" fill="#4a4a4a"/><rect x="575" y="452" width="1" height="1" fill="#4a4a4a"/><rect x="575" y="402" width="1" height="1" fill="#4a4a4a"/><rect x="575" y="352" width="1" height="1" fill="#4a4a4a"/><rect x="575" y="302" width="1" height="1" fill="#4a4a4a"/><rect x="575" y="252" width="1" height="1" fill="#4a4a4a"/><rect x="575" y="202" width="1" height="1" fill="#4a4a4a"/><rect x="575" y="152" width="1" height="1" fill="#4a4a4a"/><rect x="575" y="102" width="1" height="1" fill="#4a4a4a"/><rect x="575" y="52" width="1" height="1" fill="#4a4a4a"/><rect x="575" y="2" width="1" height="1" fill="#4a4a4a"/><rect x="625" y="552" width="1" height="1" fill="#4a4a4a"/><rect x="625" y="502" width="1" height="1" fill="#4a4a4a"/><rect x="625" y="452" width="1" height="1" fill="#4a4a4a"/><rect x="625" y="402" width="1" height="1" fill="#4a4a4a"/><rect x="625" y="352" width="1" height="1" fill="#4a4a4a"/><rect x="625" y="302" width="1" height="1" fill="#4a4a4a"/><rect x="625" y="252" width="1" height="1" fill="#4a4a4a"/><rect x="625" y="202" width="1" height="1" fill="#4a4a4a"/><rect x="625" y="152" width="1" height="1" fill="#4a4a4a"/><rect x="625" y="102" width="1" height="1" fill="#4a4a4a"/><rect x="625" y="52" width="1" height="1" fill="#4a4a4a"/><rect x="625" y="2" width="1" height="1" fill="#4a4a4a"/><rect x="675" y="552" width="1" height="1" fill="#4a4a4a"/><rect x="675" y="502" width="1" height="1" fill="#4a4a4a"/><rect x="675" y="452" width="1" height="1" fill="#4a4a4a"/><rect x="675" y="402" width="1" height="1" fill="#4a4a4a"/><rect x="675" y="352" width="1" height="1" fill="#4a4a4a"/><rect x="675" y="302" width="1" height="1" fill="#4a4a4a"/><rect x="675" y="252" width="1" height="1" fill="#4a4a4a"/><rect x="675" y="202" width="1" height="1" fill="#4a4a4a"/><rect x="675" y="152" width="1" height="1" fill="#4a4a4a"/><rect x="675" y="102" width="1" height="1" fill="#4a4a4a"/><rect x="675" y="52" width="1" height="1" fill="#4a4a4a"/><rect x="675" y="2" width="1" height="1" fill="#4a4a4a"/><rect x="725" y="552" width="1" height="1" fill="#4a4a4a"/><rect x="725" y="502" width="1" height="1" fill="#4a4a4a"/><rect x="725" y="452" width="1" height="1" fill="#4a4a4a"/><rect x="725" y="402" width="1" height="1" fill="#4a4a4a"/><rect x="725" y="352" width="1" height="1" fill="#4a4a4a"/><rect x="725" y="302" width="1" height="1" fill="#4a4a4a"/><rect x="725" y="252" width="1" height="1" fill="#4a4a4a"/><rect x="725" y="202" width="1" height="1" fill="#4a4a4a"/><rect x="725" y="152" width="1" height="1" fill="#4a4a4a"/><rect x="725" y="102" width="1" height="1" fill="#4a4a4a"/><rect x="725" y="52" width="1" height="1" fill="#4a4a4a"/><rect x="725" y="2" width="1" height="1" fill="#4a4a4a"/><rect x="775" y="552" width="1" height="1" fill="#4a4a4a"/><rect x="775" y="502" width="1" height="1" fill="#4a4a4a"/><rect x="775" y="452" width="1" height="1" fill="#4a4a4a"/><rect x="775" y="402" width="1" height="1" fill="#4a4a4a"/><rect x="775" y="352" width="1" height="1" fill="#4a4a4a"/><rect x="775" y="302" width="1" height="1" fill="#4a4a4a"/><rect x="775" y="252" width="1" height="1" fill="#4a4a4a"/><rect x="775" y="202" width="1" height="1" fill="#4a4a4a"/><rect x="775" y="152" width="1" height="1" fill="#4a4a4a"/><rect x="775" y="102" width="1" height="1" fill="#4a4a4a"/><rect x="775" y="52" width="1" height="1" fill="#4a4a4a"/><rect x="775" y="2" width="1" height="1" fill="#4a4a4a"/><rect x="825" y="552" width="1" height="1" fill="#4a4a4a"/><rect x="825" y="502" width="1" height="1" fill="#4a4a4a"/><rect x="825" y="452" width="1" height="1" fill="#4a4a4a"/><rect x="825" y="402" width="1" height="1" fill="#4a4a4a"/><rect x="825" y="352" width="1" height="1" fill="#4a4a4a"/><rect x="825" y="302" width="1" height="1" fill="#4a4a4a"/><rect x="825" y="252" width="1" height="1" fill="#4a4a4a"/><rect x="825" y="202" width="1" height="1" fill="#4a4a4a"/><rect x="825" y="152" width="1" height="1" fill="#4a4a4a"/><rect x="825" y="102" width="1" height="1" fill="#4a4a4a"/><rect x="825" y="52" width="1" height="1" fill="#4a4a4a"/><rect x="825" y="2" width="1" height="1" fill="#4a4a4a"/><rect x="875" y="552" width="1" height="1" fill="#4a4a4a"/><rect x="875" y="502" width="1" height="1" fill="#4a4a4a"/><rect x="875" y="452" width="1" height="1" fill="#4a4a4a"/><rect x="875" y="402" width="1" height="1" fill="#4a4a4a"/><rect x="875" y="352" width="1" height="1" fill="#4a4a4a"/><rect x="875" y="302" width="1" height="1" fill="#4a4a4a"/><rect x="875" y="252" width="1" height="1" fill="#4a4a4a"/><rect x="875" y="202" width="1" height="1" fill="#4a4a4a"/><rect x="875" y="152" width="1" height="1" fill="#4a4a4a"/><rect x="875" y="102" width="1" height="1" fill="#4a4a4a"/><rect x="875" y="52" width="1" height="1" fill="#4a4a4a"/><rect x="875" y="2" width="1" height="1" fill="#4a4a4a"/><rect x="925" y="552" width="1" height="1" fill="#4a4a4a"/><rect x="925" y="502" width="1" height="1" fill="#4a4a4a"/><rect x="925" y="452" width="1" height="1" fill="#4a4a4a"/><rect x="925" y="402" width="1" height="1" fill="#4a4a4a"/><rect x="925" y="352" width="1" height="1" fill="#4a4a4a"/><rect x="925" y="302" width="1" height="1" fill="#4a4a4a"/><rect x="925" y="252" width="1" height="1" fill="#4a4a4a"/><rect x="925" y="202" width="1" height="1" fill="#4a4a4a"/><rect x="925" y="152" width="1" height="1" fill="#4a4a4a"/><rect x="925" y="102" width="1" height="1" fill="#4a4a4a"/><rect x="925" y="52" width="1" height="1" fill="#4a4a4a"/><rect x="925" y="2" width="1" height="1" fill="#4a4a4a"/><rect x="975" y="552" width="1" height="1" fill="#4a4a4a"/><rect x="975" y="502" width="1" height="1" fill="#4a4a4a"/><rect x="975" y="452" width="1" height="1" fill="#4a4a4a"/><rect x="975" y="402" width="1" height="1" fill="#4a4a4a"/><rect x="975" y="352" width="1" height="1" fill="#4a4a4a"/><rect x="975" y="302" width="1" height="1" fill="#4a4a4a"/><rect x="975" y="252" width="1" height="1" fill="#4a4a4a"/><rect x="975" y="202" width="1" height="1" fill="#4a4a4a"/><rect x="975" y="152" width="1" height="1" fill="#4a4a4a"/><rect x="975" y="102" width="1" height="1" fill="#4a4a4a"/><rect x="975" y="52" width="1" height="1" fill="#4a4a4a"/><rect x="975" y="2" width="1" height="1" fill="#4a4a4a"/><rect x="5" y="551.4" width="40" height="1.3" fill="#6e0c0c"/><rect x="24.4" y="532" width="1.3" height="40" fill="#6e0c0c"/><line x1="125" y1="452" x2="375" y2="302" stroke="#7d3a32" stroke-width="1.3"/><rect x="120" y="447" width="10" height="10" fill="#c4001f" stroke="#d23a52" stroke-width="0.8"/><rect x="370" y="297" width="10" height="10" fill="#0000c0" stroke="#c0186a" stroke-width="1.2"/><path d="M375 298 L375 306 M371 302 L379 302" stroke="#7a1a8a" stroke-width="1.1"/></svg>
<svg class="a" style="left:72px;top:132px" width="1046" height="23" viewBox="0 0 1046 23"><rect x="48" y="16" width="1" height="7" fill="#777"/><text x="48" y="9" text-anchor="middle" font-family="Liberation Sans" font-size="8.8" fill="#1c1c1c">0</text><rect x="98" y="16" width="1" height="7" fill="#777"/><text x="98" y="9" text-anchor="middle" font-family="Liberation Sans" font-size="8.8" fill="#1c1c1c">10</text><rect x="148" y="16" width="1" height="7" fill="#777"/><text x="148" y="9" text-anchor="middle" font-family="Liberation Sans" font-size="8.8" fill="#1c1c1c">20</text><rect x="198" y="16" width="1" height="7" fill="#777"/><text x="198" y="9" text-anchor="middle" font-family="Liberation Sans" font-size="8.8" fill="#1c1c1c">30</text><rect x="248" y="16" width="1" height="7" fill="#777"/><text x="248" y="9" text-anchor="middle" font-family="Liberation Sans" font-size="8.8" fill="#1c1c1c">40</text><rect x="298" y="16" width="1" height="7" fill="#777"/><text x="298" y="9" text-anchor="middle" font-family="Liberation Sans" font-size="8.8" fill="#1c1c1c">50</text><rect x="348" y="16" width="1" height="7" fill="#777"/><text x="348" y="9" text-anchor="middle" font-family="Liberation Sans" font-size="8.8" fill="#1c1c1c">60</text><rect x="398" y="16" width="1" height="7" fill="#777"/><text x="398" y="9" text-anchor="middle" font-family="Liberation Sans" font-size="8.8" fill="#1c1c1c">70</text><rect x="448" y="16" width="1" height="7" fill="#777"/><text x="448" y="9" text-anchor="middle" font-family="Liberation Sans" font-size="8.8" fill="#1c1c1c">80</text><rect x="498" y="16" width="1" height="7" fill="#777"/><text x="498" y="9" text-anchor="middle" font-family="Liberation Sans" font-size="8.8" fill="#1c1c1c">90</text><rect x="548" y="16" width="1" height="7" fill="#777"/><text x="548" y="9" text-anchor="middle" font-family="Liberation Sans" font-size="8.8" fill="#1c1c1c">100</text><rect x="598" y="16" width="1" height="7" fill="#777"/><text x="598" y="9" text-anchor="middle" font-family="Liberation Sans" font-size="8.8" fill="#1c1c1c">110</text><rect x="648" y="16" width="1" height="7" fill="#777"/><text x="648" y="9" text-anchor="middle" font-family="Liberation Sans" font-size="8.8" fill="#1c1c1c">120</text><rect x="698" y="16" width="1" height="7" fill="#777"/><text x="698" y="9" text-anchor="middle" font-family="Liberation Sans" font-size="8.8" fill="#1c1c1c">130</text><rect x="748" y="16" width="1" height="7" fill="#777"/><text x="748" y="9" text-anchor="middle" font-family="Liberation Sans" font-size="8.8" fill="#1c1c1c">140</text><rect x="798" y="16" width="1" height="7" fill="#777"/><text x="798" y="9" text-anchor="middle" font-family="Liberation Sans" font-size="8.8" fill="#1c1c1c">150</text><rect x="848" y="16" width="1" height="7" fill="#777"/><text x="848" y="9" text-anchor="middle" font-family="Liberation Sans" font-size="8.8" fill="#1c1c1c">160</text><rect x="898" y="16" width="1" height="7" fill="#777"/><text x="898" y="9" text-anchor="middle" font-family="Liberation Sans" font-size="8.8" fill="#1c1c1c">170</text><rect x="948" y="16" width="1" height="7" fill="#777"/><text x="948" y="9" text-anchor="middle" font-family="Liberation Sans" font-size="8.8" fill="#1c1c1c">180</text><rect x="998" y="16" width="1" height="7" fill="#777"/><text x="998" y="9" text-anchor="middle" font-family="Liberation Sans" font-size="8.8" fill="#1c1c1c">190</text><rect x="1048" y="16" width="1" height="7" fill="#777"/><text x="1048" y="9" text-anchor="middle" font-family="Liberation Sans" font-size="8.8" fill="#1c1c1c">200</text><path d="M848.5 13 L860 13 L854.2 19 Z" fill="#000"/></svg><svg class="a" style="left:72px;top:155px" width="23" height="577" viewBox="0 0 23 577"><rect x="16" y="552" width="7" height="1" fill="#777"/><text x="0" y="0" transform="translate(9.299999999999997 552) rotate(-90)" text-anchor="middle" font-family="Liberation Sans" font-size="8.8" fill="#1c1c1c">0</text><rect x="16" y="502" width="7" height="1" fill="#777"/><text x="0" y="0" transform="translate(9.299999999999997 502) rotate(-90)" text-anchor="middle" font-family="Liberation Sans" font-size="8.8" fill="#1c1c1c">10</text><rect x="16" y="452" width="7" height="1" fill="#777"/><text x="0" y="0" transform="translate(9.299999999999997 452) rotate(-90)" text-anchor="middle" font-family="Liberation Sans" font-size="8.8" fill="#1c1c1c">20</text><rect x="16" y="402" width="7" height="1" fill="#777"/><text x="0" y="0" transform="translate(9.299999999999997 402) rotate(-90)" text-anchor="middle" font-family="Liberation Sans" font-size="8.8" fill="#1c1c1c">30</text><rect x="16" y="352" width="7" height="1" fill="#777"/><text x="0" y="0" transform="translate(9.299999999999997 352) rotate(-90)" text-anchor="middle" font-family="Liberation Sans" font-size="8.8" fill="#1c1c1c">40</text><rect x="16" y="302" width="7" height="1" fill="#777"/><text x="0" y="0" transform="translate(9.299999999999997 302) rotate(-90)" text-anchor="middle" font-family="Liberation Sans" font-size="8.8" fill="#1c1c1c">50</text><rect x="16" y="252" width="7" height="1" fill="#777"/><text x="0" y="0" transform="translate(9.299999999999997 252) rotate(-90)" text-anchor="middle" font-family="Liberation Sans" font-size="8.8" fill="#1c1c1c">60</text><rect x="16" y="202" width="7" height="1" fill="#777"/><text x="0" y="0" transform="translate(9.299999999999997 202) rotate(-90)" text-anchor="middle" font-family="Liberation Sans" font-size="8.8" fill="#1c1c1c">70</text><rect x="16" y="152" width="7" height="1" fill="#777"/><text x="0" y="0" transform="translate(9.299999999999997 152) rotate(-90)" text-anchor="middle" font-family="Liberation Sans" font-size="8.8" fill="#1c1c1c">80</text><rect x="16" y="102" width="7" height="1" fill="#777"/><text x="0" y="0" transform="translate(9.299999999999997 102) rotate(-90)" text-anchor="middle" font-family="Liberation Sans" font-size="8.8" fill="#1c1c1c">90</text><rect x="16" y="52" width="7" height="1" fill="#777"/><text x="0" y="0" transform="translate(9.299999999999997 52) rotate(-90)" text-anchor="middle" font-family="Liberation Sans" font-size="8.8" fill="#1c1c1c">100</text><rect x="16" y="2" width="7" height="1" fill="#777"/><text x="0" y="0" transform="translate(9.299999999999997 2) rotate(-90)" text-anchor="middle" font-family="Liberation Sans" font-size="8.8" fill="#1c1c1c">110</text><path d="M13 159 L19.200000000000003 165 L13 171 Z" fill="#000"/></svg>
<div class="b" style="left:1118px;top:155px;width:15px;height:577px;background:#f9f9f9"></div>
<div class="b" style="left:1123px;top:217px;width:8px;height:345px;background:#808080;border-radius:4px"></div>
<div class="b" style="left:72px;top:732px;width:23px;height:16px;background:#ececec"></div>
<div class="b" style="left:95px;top:732px;width:965px;height:16px;background:#f9f9f9"></div>
<div class="b" style="left:123px;top:737px;width:937px;height:8px;background:#808080;border-radius:4px"></div>
<div class="b" style="left:1060px;top:732px;width:73px;height:16px;background:#ececec"></div>
<div class="t" style="right:367px;top:734.00px;font-size:13px;line-height:13px;color:#111;font-weight:normal;-webkit-text-stroke:0.25px currentColor;">10 &lt; 100</div>
<div class="b" style="left:72px;top:748px;width:1061px;height:2px;background:#c8c8c8"></div>
<div class="b" style="left:72px;top:750px;width:1061px;height:21px;background:#fff;border-bottom:1px solid #c4c4c4;box-sizing:border-box"></div>
<div class="t" style="left:77px;top:751.50px;font-size:13px;line-height:13px;color:#1414d8;font-weight:normal;-webkit-text-stroke:0.25px currentColor;"><i>Kommando:</i> line</div>
<div class="b" style="left:72px;top:771px;width:1061px;height:27px;background:#ececec"></div>
<div class="t" style="left:73px;top:779.00px;font-size:13px;line-height:13px;color:#111;font-weight:normal;-webkit-text-stroke:0.25px currentColor;">Kommando:</div>
<div class="b" style="left:148px;top:776px;width:959px;height:18px;background:#fff"></div>
<div class="b" style="left:1107px;top:772px;width:26px;height:25px;background:linear-gradient(#f6f6f6,#e8e8e8);border:1px solid #b4b4b4;box-sizing:border-box"></div>
<div class="b" style="left:1133px;top:108px;width:11px;height:690px;background:#ececec"></div>
<div class="b" style="left:1144px;top:108px;width:11px;height:690px;background:#e6e6e6"></div>
<div class="b" style="left:1155px;top:108px;width:1px;height:690px;background:#cfcfcf"></div>
<div class="b" style="left:1156px;top:108px;width:299px;height:690px;background:#ececec"></div>
<div class="b" style="left:1156px;top:108px;width:299px;height:22px;background:linear-gradient(#ececec,#dedede)"></div>
<div class="b" style="left:1156px;top:130px;width:299px;height:1px;background:#cdcdcd"></div>
<svg class="a" style="left:1156px;top:110px" width="40" height="18" viewBox="0 0 40 18"><circle cx="8" cy="8" r="6.9" fill="#6a6a6a"/><path d="M5.4 5.4 L10.6 10.6 M10.6 5.4 L5.4 10.6" stroke="#fff" stroke-width="1.7" stroke-linecap="round"/><circle cx="26" cy="8" r="6.9" fill="#6a6a6a"/><rect x="24.3" y="4.8" width="5" height="4" fill="none" stroke="#fff" stroke-width="1.1"/><rect x="22.5" y="7" width="5" height="4" fill="#6a6a6a" stroke="#fff" stroke-width="1.1"/></svg><div class="t" style="left:1022px;width:600px;text-align:center;top:113.84px;font-size:12px;line-height:12px;color:#2a2a2a;font-weight:normal;-webkit-text-stroke:0.15px currentColor;">Eigenschafteneditor</div><div class="t" style="left:1168.6px;top:148.00px;font-size:13px;line-height:13px;color:#111;font-weight:normal;-webkit-text-stroke:0.25px currentColor;">Auswahl:</div><div class="b" style="left:1230px;top:143px;width:212px;height:22px;background:#ffd9d9"></div><div class="b" style="left:1231px;top:144px;width:208px;height:20px;border-radius:6px;background:#ffe0e0;box-shadow:inset 1px 0 0 #e8c8cc"></div><div class="b" style="left:1423px;top:146px;width:16px;height:16px;border-radius:4px;background:#2e6fe0"></div><svg class="a" style="left:1423px;top:146px" width="16" height="16" viewBox="0 0 16 16"><path d="M5 6.3 L8 3.8 L11 6.3 M5 9.7 L8 12.2 L11 9.7" fill="none" stroke="#fff" stroke-width="1.2" stroke-linecap="round" stroke-linejoin="round"/></svg><div class="t" style="left:1234.6px;top:148.00px;font-size:13px;line-height:13px;color:#2a1414;font-weight:normal;-webkit-text-stroke:0.25px currentColor;">Linie [1]</div><div class="b" style="left:1219px;top:142px;width:234px;height:2px;background:linear-gradient(90deg,rgba(232,110,118,0),#e86e76 8%,#e86e76 92%,rgba(232,110,118,0))"></div><div class="b" style="left:1219px;top:164px;width:234px;height:2px;background:linear-gradient(90deg,rgba(232,110,118,0),#e86e76 8%,#e86e76 92%,rgba(232,110,118,0))"></div><div class="b" style="left:1229px;top:132px;width:2px;height:44px;background:linear-gradient(rgba(232,110,118,0),#e86e76 25%,#e86e76 75%,rgba(232,110,118,0))"></div><div class="b" style="left:1441px;top:132px;width:2px;height:44px;background:linear-gradient(rgba(232,110,118,0),#e86e76 25%,#e86e76 75%,rgba(232,110,118,0))"></div><div class="t" style="left:1175.5px;top:171.31px;font-size:11.8px;line-height:11.8px;color:#1a1a1a;font-weight:normal;-webkit-text-stroke:0.15px currentColor;">Allgemeine Eigenschaften</div><div class="b" style="left:1168px;top:183px;width:274px;height:185px;box-sizing:border-box;border-radius:6px;background:#e3e3e3;border:1px solid #dadada"></div><div class="t" style="right:203.29999999999995px;top:199.40px;font-size:13px;line-height:13px;color:#111;font-weight:normal;-webkit-text-stroke:0.25px currentColor;">Layer:</div><div class="b" style="left:1300px;top:196px;width:105px;height:20px;box-sizing:border-box;border-radius:5px;background:#fff;border:1px solid #d6d6d6;box-shadow:0 0.5px 1px rgba(0,0,0,0.12)"></div><div class="b" style="left:1387px;top:198px;width:16px;height:16px;border-radius:4px;background:#0a7aff"></div><svg class="a" style="left:1387px;top:198px" width="16" height="16" viewBox="0 0 16 16"><path d="M5 6.3 L8 3.8 L11 6.3 M5 9.7 L8 12.2 L11 9.7" fill="none" stroke="#fff" stroke-width="1.2" stroke-linecap="round" stroke-linejoin="round"/></svg><div class="b" style="left:1407px;top:193px;width:26px;height:26px;box-sizing:border-box;border:1px solid #9d9d9d;background:linear-gradient(#e6e6e6,#f3f3f3)"></div><svg class="a" style="left:1407px;top:193px" width="26" height="26" viewBox="0 0 26 26"><path d="M7 8.4 L19 8.4 M7 13 L19 13 M7 17.6 L19 17.6" stroke="#6f6f6f" stroke-width="1.8" stroke-linecap="round"/></svg><div class="b" style="left:1303.5px;top:201.5px;width:15px;height:9.5px;box-sizing:border-box;border:1px solid #222"></div><div class="t" style="left:1325.5px;top:199.22px;font-size:13.8px;line-height:13.8px;color:#111;font-weight:normal;-webkit-text-stroke:0.25px currentColor;">0</div><div class="t" style="right:203.29999999999995px;top:225.30px;font-size:13px;line-height:13px;color:#111;font-weight:normal;-webkit-text-stroke:0.25px currentColor;">Farbe:</div><div class="b" style="left:1300px;top:222px;width:132px;height:20px;box-sizing:border-box;border-radius:5px;background:#fff;border:1px solid #d6d6d6;box-shadow:0 0.5px 1px rgba(0,0,0,0.12)"></div><div class="b" style="left:1414px;top:224px;width:16px;height:16px;border-radius:4px;background:#0a7aff"></div><svg class="a" style="left:1414px;top:224px" width="16" height="16" viewBox="0 0 16 16"><path d="M5 6.3 L8 3.8 L11 6.3 M5 9.7 L8 12.2 L11 9.7" fill="none" stroke="#fff" stroke-width="1.2" stroke-linecap="round" stroke-linejoin="round"/></svg><div class="b" style="left:1303.5px;top:227.5px;width:15px;height:9.5px;box-sizing:border-box;border:1px solid #222"></div><div class="t" style="left:1325.5px;top:225.30px;font-size:13px;line-height:13px;color:#111;font-weight:normal;-webkit-text-stroke:0.25px currentColor;">Von Layer</div><div class="t" style="right:203.29999999999995px;top:249.14px;font-size:13.3px;line-height:13.3px;color:#111;font-weight:normal;-webkit-text-stroke:0.25px currentColor;">Linienbreite:</div><div class="b" style="left:1300px;top:246px;width:132px;height:20px;box-sizing:border-box;border-radius:5px;background:#fff;border:1px solid #d6d6d6;box-shadow:0 0.5px 1px rgba(0,0,0,0.12)"></div><div class="b" style="left:1414px;top:248px;width:16px;height:16px;border-radius:4px;background:#0a7aff"></div><svg class="a" style="left:1414px;top:248px" width="16" height="16" viewBox="0 0 16 16"><path d="M5 6.3 L8 3.8 L11 6.3 M5 9.7 L8 12.2 L11 9.7" fill="none" stroke="#fff" stroke-width="1.2" stroke-linecap="round" stroke-linejoin="round"/></svg><div class="b" style="left:1303.5px;top:255.5px;width:15px;height:1.2px;background:#222"></div><div class="t" style="left:1325.5px;top:249.40px;font-size:13px;line-height:13px;color:#111;font-weight:normal;-webkit-text-stroke:0.25px currentColor;">Von Layer</div><div class="t" style="right:203.29999999999995px;top:272.74px;font-size:13.3px;line-height:13.3px;color:#111;font-weight:normal;-webkit-text-stroke:0.25px currentColor;">Linientyp:</div><div class="b" style="left:1300px;top:270px;width:132px;height:20px;box-sizing:border-box;border-radius:5px;background:#fff;border:1px solid #d6d6d6;box-shadow:0 0.5px 1px rgba(0,0,0,0.12)"></div><div class="b" style="left:1414px;top:272px;width:16px;height:16px;border-radius:4px;background:#0a7aff"></div><svg class="a" style="left:1414px;top:272px" width="16" height="16" viewBox="0 0 16 16"><path d="M5 6.3 L8 3.8 L11 6.3 M5 9.7 L8 12.2 L11 9.7" fill="none" stroke="#fff" stroke-width="1.2" stroke-linecap="round" stroke-linejoin="round"/></svg><div class="t" style="left:1303.4px;top:273.00px;font-size:13px;line-height:13px;color:#111;font-weight:normal;-webkit-text-stroke:0.25px currentColor;">Von Layer</div><div class="t" style="right:203.29999999999995px;top:297.04px;font-size:13.3px;line-height:13.3px;color:#111;font-weight:normal;-webkit-text-stroke:0.25px currentColor;">Linientypskalierung:</div><div class="b" style="left:1300px;top:294px;width:132px;height:20px;box-sizing:border-box;background:#fff;border-top:1px solid #e2e2e2;border-left:1px solid #e6e6e6;border-right:1px solid #e6e6e6;border-bottom:1px solid #b9b9b9"></div><div class="t" style="left:1301.4px;top:297.12px;font-size:13.8px;line-height:13.8px;color:#111;font-weight:normal;-webkit-text-stroke:0.25px currentColor;">1</div><div class="t" style="right:203.29999999999995px;top:320.04px;font-size:13.3px;line-height:13.3px;color:#111;font-weight:normal;-webkit-text-stroke:0.25px currentColor;">Reihenfolge:</div><div class="b" style="left:1300px;top:317px;width:132px;height:20px;box-sizing:border-box;background:#fff;border-top:1px solid #e2e2e2;border-left:1px solid #e6e6e6;border-right:1px solid #e6e6e6;border-bottom:1px solid #b9b9b9"></div><div class="t" style="left:1301.4px;top:320.12px;font-size:13.8px;line-height:13.8px;color:#111;font-weight:normal;-webkit-text-stroke:0.25px currentColor;">0</div><div class="t" style="right:203.29999999999995px;top:342.74px;font-size:13.3px;line-height:13.3px;color:#111;font-weight:normal;-webkit-text-stroke:0.25px currentColor;">Handle:</div><div class="b" style="left:1300px;top:340px;width:132px;height:20px;box-sizing:border-box;background:#fff;border-top:1px solid #e2e2e2;border-left:1px solid #e6e6e6;border-right:1px solid #e6e6e6;border-bottom:1px solid #b9b9b9"></div><div class="t" style="left:1301.4px;top:342.82px;font-size:13.8px;line-height:13.8px;color:#b4b4b4;font-weight:normal;-webkit-text-stroke:0.25px currentColor;">0x39</div><div class="t" style="left:1175.3px;top:375.01px;font-size:11.8px;line-height:11.8px;color:#1a1a1a;font-weight:normal;-webkit-text-stroke:0.15px currentColor;">Spezifische Eigenschaften</div><div class="b" style="left:1168px;top:387px;width:274px;height:213px;box-sizing:border-box;border-radius:6px;background:#e3e3e3;border:1px solid #dadada"></div><div class="t" style="right:240.5999999999999px;top:401.21px;font-size:13.1px;line-height:13.1px;color:#111;font-weight:normal;-webkit-text-stroke:0.25px currentColor;">Länge:</div><div class="b" style="left:1263px;top:398px;width:169px;height:20px;box-sizing:border-box;background:#fff;border-top:1px solid #e2e2e2;border-left:1px solid #e6e6e6;border-right:1px solid #e6e6e6;border-bottom:1px solid #b9b9b9"></div><div class="t" style="left:1264.4px;top:401.12px;font-size:13.8px;line-height:13.8px;color:#111;font-weight:normal;-webkit-text-stroke:0.25px currentColor;">58.30951895</div><div class="t" style="right:240.5999999999999px;top:423.51px;font-size:13.1px;line-height:13.1px;color:#111;font-weight:normal;-webkit-text-stroke:0.25px currentColor;">Gesamtlänge:</div><div class="b" style="left:1263px;top:421px;width:169px;height:20px;box-sizing:border-box;background:#fff;border-top:1px solid #e2e2e2;border-left:1px solid #e6e6e6;border-right:1px solid #e6e6e6;border-bottom:1px solid #b9b9b9"></div><div class="t" style="left:1264.4px;top:423.42px;font-size:13.8px;line-height:13.8px;color:#b4b4b4;font-weight:normal;-webkit-text-stroke:0.25px currentColor;">58.30951895</div><div class="t" style="right:240.5999999999999px;top:446.61px;font-size:13.1px;line-height:13.1px;color:#111;font-weight:normal;-webkit-text-stroke:0.25px currentColor;">Winkel:</div><div class="b" style="left:1263px;top:444px;width:169px;height:20px;box-sizing:border-box;background:#fff;border-top:1px solid #e2e2e2;border-left:1px solid #e6e6e6;border-right:1px solid #e6e6e6;border-bottom:1px solid #b9b9b9"></div><div class="t" style="left:1264.4px;top:446.52px;font-size:13.8px;line-height:13.8px;color:#111;font-weight:normal;-webkit-text-stroke:0.25px currentColor;">30.96375653</div><div class="t" style="left:1177.3px;top:468.00px;font-size:13px;line-height:13px;color:#111;font-weight:bold;-webkit-text-stroke:0.25px currentColor;letter-spacing:0.3px;">Startpunkt</div><div class="t" style="right:240.5999999999999px;top:487.51px;font-size:13.1px;line-height:13.1px;color:#111;font-weight:normal;-webkit-text-stroke:0.25px currentColor;">X:</div><div class="b" style="left:1263px;top:485px;width:169px;height:20px;box-sizing:border-box;background:#fff;border-top:1px solid #e2e2e2;border-left:1px solid #e6e6e6;border-right:1px solid #e6e6e6;border-bottom:1px solid #b9b9b9"></div><div class="t" style="left:1264.4px;top:487.42px;font-size:13.8px;line-height:13.8px;color:#111;font-weight:normal;-webkit-text-stroke:0.25px currentColor;">20</div><div class="t" style="right:240.5999999999999px;top:510.31px;font-size:13.1px;line-height:13.1px;color:#111;font-weight:normal;-webkit-text-stroke:0.25px currentColor;">Y:</div><div class="b" style="left:1263px;top:508px;width:169px;height:20px;box-sizing:border-box;background:#fff;border-top:1px solid #e2e2e2;border-left:1px solid #e6e6e6;border-right:1px solid #e6e6e6;border-bottom:1px solid #b9b9b9"></div><div class="t" style="left:1264.4px;top:510.22px;font-size:13.8px;line-height:13.8px;color:#111;font-weight:normal;-webkit-text-stroke:0.25px currentColor;">20</div><div class="t" style="left:1177.3px;top:532.00px;font-size:13px;line-height:13px;color:#111;font-weight:bold;-webkit-text-stroke:0.25px currentColor;letter-spacing:0.3px;">Endpunkt</div><div class="t" style="right:240.5999999999999px;top:551.51px;font-size:13.1px;line-height:13.1px;color:#111;font-weight:normal;-webkit-text-stroke:0.25px currentColor;">X:</div><div class="b" style="left:1263px;top:549px;width:169px;height:20px;box-sizing:border-box;background:#fff;border-top:1px solid #e2e2e2;border-left:1px solid #e6e6e6;border-right:1px solid #e6e6e6;border-bottom:1px solid #b9b9b9"></div><div class="t" style="left:1264.4px;top:551.42px;font-size:13.8px;line-height:13.8px;color:#111;font-weight:normal;-webkit-text-stroke:0.25px currentColor;">70</div><div class="t" style="right:240.5999999999999px;top:574.61px;font-size:13.1px;line-height:13.1px;color:#111;font-weight:normal;-webkit-text-stroke:0.25px currentColor;">Y:</div><div class="b" style="left:1263px;top:572px;width:169px;height:20px;box-sizing:border-box;background:#fff;border-top:1px solid #e2e2e2;border-left:1px solid #e6e6e6;border-right:1px solid #e6e6e6;border-bottom:1px solid #b9b9b9"></div><div class="t" style="left:1264.4px;top:574.52px;font-size:13.8px;line-height:13.8px;color:#111;font-weight:normal;-webkit-text-stroke:0.25px currentColor;">50</div><div class="t" style="left:1175.5px;top:606.51px;font-size:11.8px;line-height:11.8px;color:#1a1a1a;font-weight:normal;-webkit-text-stroke:0.15px currentColor;">Benutzerdefiniert</div><div class="b" style="left:1168px;top:619px;width:274px;height:53px;box-sizing:border-box;border-radius:6px;background:#e3e3e3;border:1px solid #dadada"></div><div class="b" style="left:1405px;top:635px;width:22px;height:22px;box-sizing:border-box;border:1px solid #a6a6a6;background:linear-gradient(#f4f4f4,#ececec)"></div><svg class="a" style="left:1405px;top:635px" width="22" height="22" viewBox="0 0 22 22"><path d="M7 11 L15 11 M11 7 L11 15" stroke="#d00000" stroke-width="2.2"/></svg><svg class="a" style="left:1290px;top:108px" width="95" height="95" viewBox="1290 108 95 95"><circle cx="1336.2" cy="153.7" r="36.5" fill="none" stroke="#a9bccf" stroke-opacity="0.45" stroke-width="6.5"/><circle cx="1336.2" cy="153.7" r="37.2" fill="none" stroke="#8ea5bf" stroke-opacity="0.35" stroke-width="1.6"/><circle cx="1336.2" cy="153.7" r="34.6" fill="none" stroke="#8ea5bf" stroke-opacity="0.25" stroke-width="1.2"/><path transform="translate(1336 153.2)" d="M0 0 L0 22.4 L5 17.8 L9 27 L12.8 25.3 L9 16.6 L15.3 16.4 Z" fill="#fff" stroke="#000" stroke-width="1.3" stroke-linejoin="round"/></svg><div class="b" style="left:1135px;top:340px;width:20px;height:144px;border-radius:5px 0 0 5px;background:#1a84ff"></div><div class="t" style="left:1145px;top:412px;transform:translate(-50%,-50%) rotate(-90deg);font-size:13.4px;line-height:14px;color:#fff">Eigenschafteneditor</div><div class="b" style="left:1135px;top:488px;width:20px;height:81px;border-radius:5px 0 0 5px;background:#d7d7d7"></div><div class="t" style="left:1145px;top:528.5px;transform:translate(-50%,-50%) rotate(-90deg);font-size:13.4px;line-height:14px;color:#333">Layerliste</div>
<div class="b" style="left:1455px;top:108px;width:45px;height:690px;background:linear-gradient(90deg,#f4f4f4,#e8e8e8 4%,#cdcdcd 95%,#bbbbbb 96%,#b8b8b8)"></div>
<div class="b" style="left:1454px;top:108px;width:1px;height:690px;background:#d0d0d0"></div>
<svg class="a" style="left:1455px;top:108px" width="45" height="400" viewBox="1455 108 45 400"><rect x="1462" y="116.5" width="1.6" height="1.6" fill="#999"/><rect x="1468" y="116.5" width="1.6" height="1.6" fill="#999"/><rect x="1474" y="116.5" width="1.6" height="1.6" fill="#999"/><rect x="1480" y="116.5" width="1.6" height="1.6" fill="#999"/><rect x="1486" y="116.5" width="1.6" height="1.6" fill="#999"/><rect x="1458" y="260.5" width="1.6" height="1.6" fill="#999"/><rect x="1464" y="260.5" width="1.6" height="1.6" fill="#999"/><rect x="1470" y="260.5" width="1.6" height="1.6" fill="#999"/><rect x="1476" y="260.5" width="1.6" height="1.6" fill="#999"/><rect x="1482" y="260.5" width="1.6" height="1.6" fill="#999"/><rect x="1488" y="260.5" width="1.6" height="1.6" fill="#999"/><rect x="1494" y="260.5" width="1.6" height="1.6" fill="#999"/><rect x="1458" y="409.5" width="1.6" height="1.6" fill="#999"/><rect x="1464" y="409.5" width="1.6" height="1.6" fill="#999"/><rect x="1470" y="409.5" width="1.6" height="1.6" fill="#999"/><rect x="1476" y="409.5" width="1.6" height="1.6" fill="#999"/><rect x="1482" y="409.5" width="1.6" height="1.6" fill="#999"/><rect x="1488" y="409.5" width="1.6" height="1.6" fill="#999"/><rect x="1494" y="409.5" width="1.6" height="1.6" fill="#999"/><rect x="1456" y="120" width="42.5" height="42.5" rx="5" fill="#b6b6b6"/><rect x="1456" y="269" width="42.5" height="42.5" rx="5" fill="#b6b6b6"/><rect x="1456" y="418" width="42.5" height="42.5" rx="5" fill="#b6b6b6"/><rect x="1463.5" y="127.5" width="27" height="27" fill="#fff" stroke="#333" stroke-width="1"/><rect x="1463" y="127" width="28" height="4.5" fill="#000"/><rect x="1464.2" y="128" width="3" height="3" fill="#fff"/><path d="M1470.3 141.3 L1479.8 136.2 L1483.5 136 L1474.2 140.3 L1474.2 149.3 L1470.3 149.3 Z" fill="#9a9a9a" stroke="#555" stroke-width="0.8" stroke-linejoin="round"/><path d="M1474.2 140.3 L1483.5 136 L1483.5 144.3 L1474.2 149.3 Z" fill="#fff" stroke="#444" stroke-width="0.8" stroke-dasharray="1.4 0.6"/><path d="M1476.3 146.6 L1480.5 140.2 L1481.4 143.6" fill="none" stroke="#ff4040" stroke-width="0.9"/><rect x="1463.5" y="174.5" width="27" height="27" fill="#fff" stroke="#333" stroke-width="1"/><rect x="1463" y="174" width="28" height="4.5" fill="#000"/><rect x="1464.2" y="175" width="3" height="3" fill="#fff"/><rect x="1469" y="182.5" width="10.5" height="7" fill="#fbefc0" stroke="#444" stroke-width="0.7"/><circle cx="1478.5" cy="189.5" r="4" fill="#fbefc0" fill-opacity="0.85" stroke="#444" stroke-width="0.7"/><rect x="1463.5" y="220.5" width="27" height="27" fill="#fff" stroke="#333" stroke-width="1"/><rect x="1463" y="220" width="28" height="4.5" fill="#000"/><rect x="1464.2" y="221" width="3" height="3" fill="#fff"/><rect x="1468.5" y="230" width="17" height="11" rx="2" fill="#f6f6f6" stroke="#bcd0e8" stroke-width="0.8"/><rect x="1463.5" y="276.5" width="27" height="27" fill="#fff" stroke="#333" stroke-width="1"/><rect x="1463" y="276" width="28" height="4.5" fill="#000"/><rect x="1464.2" y="277" width="3" height="3" fill="#fff"/><rect x="1466.5" y="282.5" width="3.6" height="3" rx="0.8" fill="#000"/><rect x="1471.5" y="282.2" width="14.5" height="3.2" fill="#fff" stroke="#555" stroke-width="0.6"/><rect x="1466.5" y="288.5" width="3.6" height="3" rx="0.8" fill="#000"/><rect x="1471.5" y="288.2" width="14.5" height="3.2" fill="#fff" stroke="#555" stroke-width="0.6"/><rect x="1466.5" y="294.5" width="3.6" height="3" rx="0.8" fill="#000"/><rect x="1471.5" y="294.2" width="14.5" height="3.2" fill="#fff" stroke="#555" stroke-width="0.6"/><rect x="1463.5" y="323.5" width="27" height="27" fill="#fff" stroke="#333" stroke-width="1"/><rect x="1463" y="323" width="28" height="4.5" fill="#000"/><rect x="1464.2" y="324" width="3" height="3" fill="#fff"/><path d="M1470 333.2 Q1477 331 1484.2 333.2 L1478.6 340 L1478.6 345.5 L1478 346 L1475.5 344.5 L1475.5 340 Z" fill="#c8c8c8" stroke="#666" stroke-width="0.6"/><ellipse cx="1477.1" cy="333" rx="7" ry="1.3" fill="#6a6a6a"/><path d="M1476.3 341 L1476.3 344" stroke="#fff" stroke-width="0.8"/><rect x="1463.5" y="369.5" width="27" height="27" fill="#fff" stroke="#333" stroke-width="1"/><rect x="1463" y="369" width="28" height="4.5" fill="#000"/><rect x="1464.2" y="370" width="3" height="3" fill="#fff"/><path d="M1469.3 378.5 L1473.5 381.5 L1473.5 389 L1469.3 392 Z" fill="#f4f4f4" stroke="#333" stroke-width="0.8"/><rect x="1473.5" y="381.3" width="3.3" height="7.8" fill="#fff" stroke="#555" stroke-width="0.5"/><rect x="1476.8" y="381" width="7" height="8.4" rx="1.6" fill="#8a8a8a" stroke="#555" stroke-width="0.5"/><line x1="1466.5" y1="385.2" x2="1487" y2="385.2" stroke="#f08080" stroke-width="0.7" stroke-dasharray="1.4 0.9"/><rect x="1463.5" y="425.5" width="27" height="27" fill="#fff" stroke="#333" stroke-width="1"/><rect x="1463" y="425" width="28" height="4.5" fill="#000"/><rect x="1464.2" y="426" width="3" height="3" fill="#fff"/><rect x="1465" y="433.3" width="14.5" height="0.9" fill="#9a9a9a"/><rect x="1465" y="436.65000000000003" width="13.5" height="0.9" fill="#9a9a9a"/><rect x="1465" y="440.0" width="16" height="0.9" fill="#9a9a9a"/><rect x="1465" y="443.35" width="17" height="0.9" fill="#9a9a9a"/><rect x="1463.5" y="447" width="27" height="0.9" fill="#222"/><rect x="1465" y="449.6" width="2.5" height="1.2" fill="#777"/><rect x="1472" y="449.6" width="16" height="1.3" fill="#666"/><rect x="1463.5" y="472.5" width="27" height="27" fill="#fff" stroke="#333" stroke-width="1"/><rect x="1463" y="472" width="28" height="4.5" fill="#000"/><rect x="1464.2" y="473" width="3" height="3" fill="#fff"/><rect x="1470" y="480" width="13.5" height="14.5" rx="1" fill="#c5851f"/><rect x="1471.8" y="481.5" width="10" height="11.5" fill="#f4f4f4"/><rect x="1474" y="479" width="5.5" height="3" rx="0.8" fill="#8a8a80"/><rect x="1473" y="485" width="7" height="0.8" fill="#bbb"/><rect x="1473" y="487.2" width="7" height="0.8" fill="#bbb"/><rect x="1473" y="489.4" width="5" height="0.8" fill="#bbb"/></svg>
<div class="b" style="left:0px;top:798px;width:1500px;height:46px;background:#dcdcdc"></div>
<div class="b" style="left:0px;top:798px;width:1500px;height:1px;background:#cbcbcb"></div>
<div class="t" style="left:2px;top:807.96px;font-size:9.5px;line-height:9.5px;color:#111;font-weight:normal;-webkit-text-stroke:0.05px currentColor;">161.2,77.4</div>
<div class="t" style="left:2px;top:827.26px;font-size:9.5px;line-height:9.5px;color:#111;font-weight:normal;-webkit-text-stroke:0.05px currentColor;">@91.2,27.4</div>
<div class="b" style="left:253px;top:802px;width:1px;height:42px;background:#a4a4a4"></div>
<div class="t" style="left:256px;top:807.96px;font-size:9.5px;line-height:9.5px;color:#111;font-weight:normal;-webkit-text-stroke:0.05px currentColor;">178.8189&lt;26°</div>
<div class="t" style="left:256px;top:827.26px;font-size:9.5px;line-height:9.5px;color:#111;font-weight:normal;-webkit-text-stroke:0.05px currentColor;">@95.2271&lt;17°</div>
<div class="t" style="right:800.7px;top:812.53px;font-size:10px;line-height:10px;color:#111;font-weight:normal;-webkit-text-stroke:0.05px currentColor;letter-spacing:0.07px;">Element oder Bereich selektieren</div>
<div class="t" style="right:800.7px;top:823.33px;font-size:10px;line-height:10px;color:#111;font-weight:normal;-webkit-text-stroke:0.05px currentColor;letter-spacing:0.07px;">Element oder Referenzpunkt verschieben</div>
<div class="b" style="left:506.5px;top:819px;width:6px;height:6px;border-radius:3px;background:#c4c4c4"></div>
<div class="b" style="left:939px;top:819px;width:6px;height:6px;border-radius:3px;background:#c4c4c4"></div>
<div class="b" style="left:1269px;top:819px;width:6px;height:6px;border-radius:3px;background:#c4c4c4"></div>
<svg class="a" style="left:716px;top:804px" width="22" height="34" viewBox="716 804 22 34"><path d="M718.5 814 Q718.5 806 727 806 Q735.5 806 735.5 814 L735.5 827 Q735.5 835.5 727 835.5 Q718.5 835.5 718.5 827 Z" fill="#fff" stroke="#222" stroke-width="1"/><path d="M718.5 817.5 Q727 816 735.5 817.5" fill="none" stroke="#222" stroke-width="1"/><line x1="727" y1="806" x2="727" y2="816.5" stroke="#222" stroke-width="0.8"/><rect x="725.3" y="808" width="3.4" height="6.5" rx="1.7" fill="#fff" stroke="#222" stroke-width="0.8"/></svg>
<div class="t" style="left:949px;top:812.53px;font-size:10px;line-height:10px;color:#111;font-weight:normal;-webkit-text-stroke:0.05px currentColor;letter-spacing:0.1px;">Selektierte Objekte:</div>
<div class="t" style="left:949px;top:823.33px;font-size:10px;line-height:10px;color:#111;font-weight:normal;-webkit-text-stroke:0.05px currentColor;letter-spacing:0.1px;">1 Linie auf Layer "0".</div>
<svg class="a" style="left:1107px;top:772px" width="26" height="25" viewBox="0 0 26 25"><rect x="6.5" y="8.5" width="13" height="8.8" fill="#e6e6e6" stroke="#333" stroke-width="1"/><rect x="6" y="8" width="14" height="2.8" fill="#111"/><rect x="16" y="8.6" width="1" height="1" fill="#fff"/></svg>
</div>
</body></html>
